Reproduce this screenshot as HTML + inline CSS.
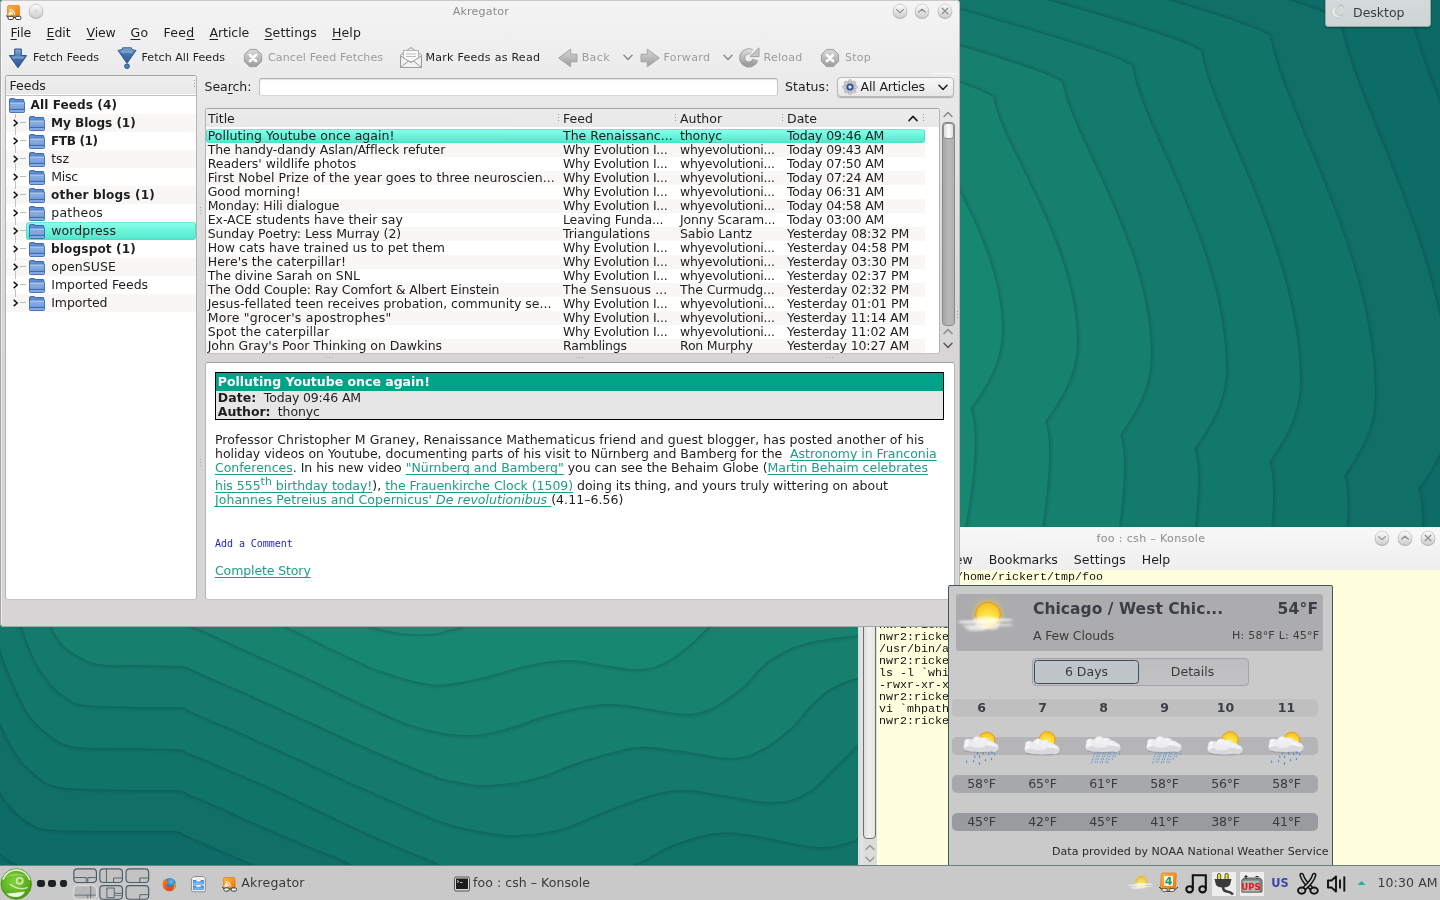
<!DOCTYPE html><html><head><meta charset="utf-8"><title>Desktop</title><style>
*{margin:0;padding:0;box-sizing:border-box}
html,body{width:1440px;height:900px;overflow:hidden;background:#127a6b}
body{position:relative;font-family:"DejaVu Sans","Liberation Sans",sans-serif;font-size:12.5px;color:#1e1e1e;-webkit-font-smoothing:antialiased}
#root{position:absolute;left:0;top:0;width:1440px;height:900px;overflow:hidden;will-change:transform}
.ab{position:absolute;white-space:pre}
.t{font-size:12.5px;line-height:15px;height:15px}
.s{font-size:11.05px;line-height:14px;height:14px}
.b{font-weight:bold}
.tb{font-size:12.1px;font-weight:bold}
.dis{color:#9c9c9c}
.mono{font-family:"Liberation Mono","DejaVu Sans Mono",monospace;font-size:11.67px;line-height:12px;height:12px;color:#111}
u{text-decoration:underline;text-underline-offset:1.5px;text-decoration-thickness:1px;text-decoration-skip-ink:none}
a{color:#1b9e86;text-decoration:underline;text-underline-offset:1.5px;text-decoration-thickness:1px;text-decoration-skip-ink:none}
#akr{left:0;top:0;width:960px;height:627px;border-radius:4px 4px 4px 4px;background:linear-gradient(#f4f4f4 0,#f1f1f1 30px,#ebebeb 75px,#e7e7e7 110px,#e0e0e0 200px,#d8d7d7 300px,#d7d5d6 360px,#d7d5d6 627px);box-shadow:0 0 0 1px rgba(90,90,90,.0);overflow:hidden}
.frame{background:#fff;border:1px solid #b4b4b4;border-top-color:#a2a2a2;border-bottom-color:#c4c4c4;border-radius:3px}
.row{left:0;width:100%}
.sel{background:linear-gradient(#88ffe9,#52e8cd);border:1px solid #4fe0c6;border-top-color:#6ee8d2;border-radius:3px}
</style></head><body><div id="root">
<svg width="0" height="0" style="position:absolute"><defs>
<linearGradient id="fg" x1="0" y1="0" x2="0" y2="1"><stop offset="0" stop-color="#8db1e4"/><stop offset="0.6" stop-color="#7aa1da"/><stop offset="1" stop-color="#8cb0e4"/></linearGradient>
<linearGradient id="bl" x1="0" y1="0" x2="0" y2="1"><stop offset="0" stop-color="#86aedb"/><stop offset="0.45" stop-color="#4272ad"/><stop offset="1" stop-color="#2d5a96"/></linearGradient>
<linearGradient id="gr" x1="0" y1="0" x2="0" y2="1"><stop offset="0" stop-color="#d8d8d8"/><stop offset="1" stop-color="#9c9c9c"/></linearGradient>
<radialGradient id="sun" cx=".5" cy=".7" r=".8"><stop offset="0" stop-color="#fff34a"/><stop offset=".45" stop-color="#fbdc3a"/><stop offset="1" stop-color="#f3b024"/></radialGradient>
<radialGradient id="cl" cx=".4" cy=".35" r=".85"><stop offset="0" stop-color="#fbfbfb"/><stop offset=".55" stop-color="#e6e6e9"/><stop offset="1" stop-color="#bcbcc2"/></radialGradient>
<radialGradient id="suse" cx=".42" cy=".42" r=".62"><stop offset="0" stop-color="#80d23c"/><stop offset=".6" stop-color="#62b424"/><stop offset="1" stop-color="#4c9a14"/></radialGradient>
<linearGradient id="btn" x1="0" y1="0" x2="0" y2="1"><stop offset="0" stop-color="#fbfbfb"/><stop offset="1" stop-color="#cfcfcf"/></linearGradient>
<linearGradient id="org" x1="0" y1="0" x2="1" y2="1"><stop offset="0" stop-color="#ffb24a"/><stop offset="1" stop-color="#f07800"/></linearGradient>
</defs></svg>
<svg class="ab" style="left:0;top:0" id="wall" width="1440" height="900" viewBox="0 0 1440 900">
<defs>
<filter id="wb" x="-5%" y="-5%" width="110%" height="110%"><feGaussianBlur stdDeviation="1.5"/></filter>
<clipPath id="ra"><rect x="955" y="0" width="485" height="600"/></clipPath>
<clipPath id="rb"><rect x="0" y="620" width="870" height="250"/></clipPath>
<clipPath id="c1"><path d="M654,64C724,84 830,113 854,128C862,165 927,240 927,315C927,350 909,376 896,395C903,411 901,455 890,520L890,1000 L1600,1000 L1600,-200 L654,-200 Z"/></clipPath>
<clipPath id="c2"><path d="M724,48C794,68 900,97 924,112C932,156 1002,242 1002,329C1002,364 984,390 970,409C978,425 976,469 964,534L964,1000 L1600,1000 L1600,-200 L724,-200 Z"/></clipPath>
<clipPath id="c3"><path d="M793,33C863,53 969,82 993,97C1001,146 1077,244 1077,342C1077,377 1058,403 1045,422C1052,438 1050,482 1039,547L1039,1000 L1600,1000 L1600,-200 L793,-200 Z"/></clipPath>
<clipPath id="c4"><path d="M862,18C932,38 1038,67 1062,82C1071,136 1151,246 1151,355C1151,390 1133,416 1120,435C1127,451 1125,495 1114,560L1114,1000 L1600,1000 L1600,-200 L862,-200 Z"/></clipPath>
<clipPath id="c5"><path d="M932,2C1002,22 1108,51 1132,66C1141,127 1226,248 1226,369C1226,404 1207,430 1194,449C1201,465 1199,509 1188,574L1188,1000 L1600,1000 L1600,-200 L932,-200 Z"/></clipPath>
<clipPath id="c6"><path d="M1001,-13C1071,7 1177,36 1201,51C1211,117 1300,250 1300,382C1300,417 1282,443 1269,462C1276,478 1274,522 1263,587L1263,1000 L1600,1000 L1600,-200 L1001,-200 Z"/></clipPath>
<clipPath id="c7"><path d="M1070,-28C1140,-8 1246,21 1270,36C1281,108 1375,252 1375,396C1375,431 1356,457 1344,476C1350,492 1348,536 1338,601L1338,1000 L1600,1000 L1600,-200 L1070,-200 Z"/></clipPath>
<clipPath id="c8"><path d="M1140,-44C1210,-24 1316,6 1340,20C1351,98 1450,254 1450,409C1450,444 1431,470 1418,489C1425,505 1423,549 1412,614L1412,1000 L1600,1000 L1600,-200 L1140,-200 Z"/></clipPath>
<clipPath id="c9"><path d="M1209,-59C1279,-39 1385,-10 1409,5C1420,89 1524,256 1524,422C1524,457 1506,483 1493,502C1500,518 1498,562 1487,627L1487,1000 L1600,1000 L1600,-200 L1209,-200 Z"/></clipPath>
<clipPath id="c10"><path d="M1278,-74C1348,-54 1454,-25 1478,-10C1490,79 1599,257 1599,436C1599,471 1580,497 1567,516C1574,532 1572,576 1561,641L1561,1000 L1600,1000 L1600,-200 L1278,-200 Z"/></clipPath>
<clipPath id="c11"><path d="M343,614C348,616 364,623 373,627C383,630 391,631 400,633C410,634 422,635 430,634C438,634 443,632 448,630C453,629 455,629 460,627C464,624 472,616 475,614L475,400 L1300,400 L1300,1100 L-300,1100 L-300,400 L343,400 Z"/></clipPath>
<clipPath id="c12"><path d="M245,607C252,610 273,620 287,627C301,633 314,640 328,647C343,654 361,663 373,668C386,673 394,675 403,678C413,681 422,683 430,684C438,685 445,685 454,683C463,682 471,680 484,677C496,674 515,668 529,665C542,662 555,660 567,660C580,660 591,663 603,665C615,666 629,670 639,669C649,669 655,667 663,663C671,660 679,653 687,647C694,641 702,633 708,627C714,620 720,611 723,608L723,400 L1300,400 L1300,1100 L-300,1100 L-300,400 L245,400 Z"/></clipPath>
<clipPath id="c13"><path d="M149,607C157,610 179,620 194,627C209,633 221,639 239,647C256,655 279,665 299,674C319,683 341,694 358,702C376,710 391,717 403,722C415,726 419,728 430,730C441,733 456,735 469,735C481,735 490,733 505,729C519,725 539,717 555,713C572,708 588,705 603,704C618,703 631,706 645,708C659,710 675,714 687,714C698,714 704,711 714,707C723,702 735,693 744,686C752,678 757,669 767,662C777,655 788,648 803,644C819,639 843,637 860,635C877,633 900,632 908,632L1208,632 L1300,1100 L-300,1100 L-300,400 L149,400 Z"/></clipPath>
<clipPath id="c14"><path d="M42,602C44,606 49,620 52,627C55,633 56,636 60,641C63,646 68,650 75,654C81,658 89,662 99,664C108,666 128,665 134,665L179,666Q187,666 191,669C199,673 221,682 239,690C257,698 279,708 299,717C319,726 336,734 358,744C380,753 413,768 430,774C447,781 450,780 460,782C470,784 477,786 490,785C502,784 518,783 535,778C551,774 571,764 588,759C606,754 623,748 639,747C655,746 669,750 684,751C699,753 716,758 729,758C741,758 749,756 758,751C768,747 779,738 788,730C797,723 805,711 812,704C820,696 825,692 833,687C841,683 848,680 860,677C872,673 900,669 908,668L1208,668 L1300,1100 L-300,1100 L-300,400 L42,400 Z"/></clipPath>
<clipPath id="c15"><path d="M16,602C17,606 20,618 22,627C25,636 29,647 33,656C37,665 42,673 48,680C53,687 59,693 66,697C72,701 75,704 87,705C98,707 126,706 134,707L178,707Q186,707 190,711C198,715 221,724 239,732C257,740 279,750 299,759C319,768 336,776 358,786C380,795 413,810 430,817C447,824 450,824 460,827C470,829 480,831 490,833C500,834 507,836 520,835C532,834 547,833 564,828C582,822 605,810 624,804C643,797 660,791 678,790C695,789 713,794 729,796C745,798 760,803 773,802C786,802 796,799 806,793C816,788 824,778 833,769C842,761 850,752 860,742C870,732 887,715 893,710L1193,710 L1300,1100 L-300,1100 L-300,400 L16,400 Z"/></clipPath>
<clipPath id="c16"><path d="M-9,620C-7,625 -3,638 0,648C3,658 7,669 12,680C17,691 23,706 30,716C37,725 46,733 54,738C62,743 64,745 78,747C91,749 125,748 134,748L176,749Q184,749 188,753C197,756 220,766 239,774C257,782 279,791 299,801C319,810 336,819 358,829C380,839 413,853 430,860C447,867 445,868 460,871C475,874 500,879 520,880C539,881 560,879 579,877C598,874 617,870 633,865C649,859 661,849 675,844C689,839 703,834 717,833C731,831 742,834 758,836C775,839 803,846 818,847C833,848 841,844 848,842C855,841 853,841 860,836C867,832 887,818 893,814L1193,814 L1300,1100 L-300,1100 L-300,620 Z"/></clipPath>
<clipPath id="c17"><path d="M-9,698C-7,702 -4,713 0,722C4,730 9,743 15,751C20,760 25,766 33,772C40,778 43,784 60,787C77,790 122,789 134,790L176,790Q184,790 188,794C197,797 220,807 239,816C257,824 280,834 299,842C318,851 340,857 352,865C364,873 367,885 370,889L670,889 L1300,1100 L-300,1100 L-300,698 Z"/></clipPath>
<clipPath id="c18"><path d="M-9,775C-7,778 -3,786 0,792C3,797 7,803 12,808C17,813 23,819 30,823C37,827 36,828 54,830C71,831 121,831 134,831L173,831Q181,831 185,835C197,840 235,856 254,865C273,874 289,882 299,889C308,895 309,901 311,904L611,904 L1300,1100 L-300,1100 L-300,775 Z"/></clipPath>
<clipPath id="c19"><path d="M-9,841C-7,843 -4,849 0,853C4,857 10,861 18,865C25,869 40,875 45,877L345,877 L1300,1100 L-300,1100 L-300,841 Z"/></clipPath>
</defs>
<rect width="1440" height="900" fill="#1a8a70"/>
<g clip-path="url(#ra)"><g clip-path="url(#c1)"><path d="M654,64C724,84 830,113 854,128C862,165 927,240 927,315C927,350 909,376 896,395C903,411 901,455 890,520L890,1000 L1600,1000 L1600,-200 L654,-200 Z" fill="#18876f"/><path d="M654,64C724,84 830,113 854,128C862,165 927,240 927,315C927,350 909,376 896,395C903,411 901,455 890,520" fill="none" stroke="#023a38" stroke-opacity="0.3" stroke-width="4" filter="url(#wb)"/></g><g clip-path="url(#c2)"><path d="M724,48C794,68 900,97 924,112C932,156 1002,242 1002,329C1002,364 984,390 970,409C978,425 976,469 964,534L964,1000 L1600,1000 L1600,-200 L724,-200 Z" fill="#17836e"/><path d="M724,48C794,68 900,97 924,112C932,156 1002,242 1002,329C1002,364 984,390 970,409C978,425 976,469 964,534" fill="none" stroke="#023a38" stroke-opacity="0.3" stroke-width="4" filter="url(#wb)"/></g><g clip-path="url(#c3)"><path d="M793,33C863,53 969,82 993,97C1001,146 1077,244 1077,342C1077,377 1058,403 1045,422C1052,438 1050,482 1039,547L1039,1000 L1600,1000 L1600,-200 L793,-200 Z" fill="#167f6d"/><path d="M793,33C863,53 969,82 993,97C1001,146 1077,244 1077,342C1077,377 1058,403 1045,422C1052,438 1050,482 1039,547" fill="none" stroke="#023a38" stroke-opacity="0.3" stroke-width="4" filter="url(#wb)"/></g><g clip-path="url(#c4)"><path d="M862,18C932,38 1038,67 1062,82C1071,136 1151,246 1151,355C1151,390 1133,416 1120,435C1127,451 1125,495 1114,560L1114,1000 L1600,1000 L1600,-200 L862,-200 Z" fill="#147b6c"/><path d="M862,18C932,38 1038,67 1062,82C1071,136 1151,246 1151,355C1151,390 1133,416 1120,435C1127,451 1125,495 1114,560" fill="none" stroke="#023a38" stroke-opacity="0.3" stroke-width="4" filter="url(#wb)"/></g><g clip-path="url(#c5)"><path d="M932,2C1002,22 1108,51 1132,66C1141,127 1226,248 1226,369C1226,404 1207,430 1194,449C1201,465 1199,509 1188,574L1188,1000 L1600,1000 L1600,-200 L932,-200 Z" fill="#12786a"/><path d="M932,2C1002,22 1108,51 1132,66C1141,127 1226,248 1226,369C1226,404 1207,430 1194,449C1201,465 1199,509 1188,574" fill="none" stroke="#023a38" stroke-opacity="0.3" stroke-width="4" filter="url(#wb)"/></g><g clip-path="url(#c6)"><path d="M1001,-13C1071,7 1177,36 1201,51C1211,117 1300,250 1300,382C1300,417 1282,443 1269,462C1276,478 1274,522 1263,587L1263,1000 L1600,1000 L1600,-200 L1001,-200 Z" fill="#117469"/><path d="M1001,-13C1071,7 1177,36 1201,51C1211,117 1300,250 1300,382C1300,417 1282,443 1269,462C1276,478 1274,522 1263,587" fill="none" stroke="#023a38" stroke-opacity="0.3" stroke-width="4" filter="url(#wb)"/></g><g clip-path="url(#c7)"><path d="M1070,-28C1140,-8 1246,21 1270,36C1281,108 1375,252 1375,396C1375,431 1356,457 1344,476C1350,492 1348,536 1338,601L1338,1000 L1600,1000 L1600,-200 L1070,-200 Z" fill="#107068"/><path d="M1070,-28C1140,-8 1246,21 1270,36C1281,108 1375,252 1375,396C1375,431 1356,457 1344,476C1350,492 1348,536 1338,601" fill="none" stroke="#023a38" stroke-opacity="0.3" stroke-width="4" filter="url(#wb)"/></g><g clip-path="url(#c8)"><path d="M1140,-44C1210,-24 1316,6 1340,20C1351,98 1450,254 1450,409C1450,444 1431,470 1418,489C1425,505 1423,549 1412,614L1412,1000 L1600,1000 L1600,-200 L1140,-200 Z" fill="#0e6c67"/><path d="M1140,-44C1210,-24 1316,6 1340,20C1351,98 1450,254 1450,409C1450,444 1431,470 1418,489C1425,505 1423,549 1412,614" fill="none" stroke="#023a38" stroke-opacity="0.3" stroke-width="4" filter="url(#wb)"/></g><g clip-path="url(#c9)"><path d="M1209,-59C1279,-39 1385,-10 1409,5C1420,89 1524,256 1524,422C1524,457 1506,483 1493,502C1500,518 1498,562 1487,627L1487,1000 L1600,1000 L1600,-200 L1209,-200 Z" fill="#0c6966"/><path d="M1209,-59C1279,-39 1385,-10 1409,5C1420,89 1524,256 1524,422C1524,457 1506,483 1493,502C1500,518 1498,562 1487,627" fill="none" stroke="#023a38" stroke-opacity="0.3" stroke-width="4" filter="url(#wb)"/></g><g clip-path="url(#c10)"><path d="M1278,-74C1348,-54 1454,-25 1478,-10C1490,79 1599,257 1599,436C1599,471 1580,497 1567,516C1574,532 1572,576 1561,641L1561,1000 L1600,1000 L1600,-200 L1278,-200 Z" fill="#0b6565"/><path d="M1278,-74C1348,-54 1454,-25 1478,-10C1490,79 1599,257 1599,436C1599,471 1580,497 1567,516C1574,532 1572,576 1561,641" fill="none" stroke="#023a38" stroke-opacity="0.3" stroke-width="4" filter="url(#wb)"/></g></g>
<g clip-path="url(#rb)"><g clip-path="url(#c11)"><path d="M343,614C348,616 364,623 373,627C383,630 391,631 400,633C410,634 422,635 430,634C438,634 443,632 448,630C453,629 455,629 460,627C464,624 472,616 475,614L475,400 L1300,400 L1300,1100 L-300,1100 L-300,400 L343,400 Z" fill="#18876f"/><path d="M343,614C348,616 364,623 373,627C383,630 391,631 400,633C410,634 422,635 430,634C438,634 443,632 448,630C453,629 455,629 460,627C464,624 472,616 475,614" fill="none" stroke="#023a38" stroke-opacity="0.3" stroke-width="4" filter="url(#wb)"/></g><g clip-path="url(#c12)"><path d="M245,607C252,610 273,620 287,627C301,633 314,640 328,647C343,654 361,663 373,668C386,673 394,675 403,678C413,681 422,683 430,684C438,685 445,685 454,683C463,682 471,680 484,677C496,674 515,668 529,665C542,662 555,660 567,660C580,660 591,663 603,665C615,666 629,670 639,669C649,669 655,667 663,663C671,660 679,653 687,647C694,641 702,633 708,627C714,620 720,611 723,608L723,400 L1300,400 L1300,1100 L-300,1100 L-300,400 L245,400 Z" fill="#17836e"/><path d="M245,607C252,610 273,620 287,627C301,633 314,640 328,647C343,654 361,663 373,668C386,673 394,675 403,678C413,681 422,683 430,684C438,685 445,685 454,683C463,682 471,680 484,677C496,674 515,668 529,665C542,662 555,660 567,660C580,660 591,663 603,665C615,666 629,670 639,669C649,669 655,667 663,663C671,660 679,653 687,647C694,641 702,633 708,627C714,620 720,611 723,608" fill="none" stroke="#023a38" stroke-opacity="0.3" stroke-width="4" filter="url(#wb)"/></g><g clip-path="url(#c13)"><path d="M149,607C157,610 179,620 194,627C209,633 221,639 239,647C256,655 279,665 299,674C319,683 341,694 358,702C376,710 391,717 403,722C415,726 419,728 430,730C441,733 456,735 469,735C481,735 490,733 505,729C519,725 539,717 555,713C572,708 588,705 603,704C618,703 631,706 645,708C659,710 675,714 687,714C698,714 704,711 714,707C723,702 735,693 744,686C752,678 757,669 767,662C777,655 788,648 803,644C819,639 843,637 860,635C877,633 900,632 908,632L1208,632 L1300,1100 L-300,1100 L-300,400 L149,400 Z" fill="#167f6d"/><path d="M149,607C157,610 179,620 194,627C209,633 221,639 239,647C256,655 279,665 299,674C319,683 341,694 358,702C376,710 391,717 403,722C415,726 419,728 430,730C441,733 456,735 469,735C481,735 490,733 505,729C519,725 539,717 555,713C572,708 588,705 603,704C618,703 631,706 645,708C659,710 675,714 687,714C698,714 704,711 714,707C723,702 735,693 744,686C752,678 757,669 767,662C777,655 788,648 803,644C819,639 843,637 860,635C877,633 900,632 908,632" fill="none" stroke="#023a38" stroke-opacity="0.3" stroke-width="4" filter="url(#wb)"/></g><g clip-path="url(#c14)"><path d="M42,602C44,606 49,620 52,627C55,633 56,636 60,641C63,646 68,650 75,654C81,658 89,662 99,664C108,666 128,665 134,665L179,666Q187,666 191,669C199,673 221,682 239,690C257,698 279,708 299,717C319,726 336,734 358,744C380,753 413,768 430,774C447,781 450,780 460,782C470,784 477,786 490,785C502,784 518,783 535,778C551,774 571,764 588,759C606,754 623,748 639,747C655,746 669,750 684,751C699,753 716,758 729,758C741,758 749,756 758,751C768,747 779,738 788,730C797,723 805,711 812,704C820,696 825,692 833,687C841,683 848,680 860,677C872,673 900,669 908,668L1208,668 L1300,1100 L-300,1100 L-300,400 L42,400 Z" fill="#147b6c"/><path d="M42,602C44,606 49,620 52,627C55,633 56,636 60,641C63,646 68,650 75,654C81,658 89,662 99,664C108,666 128,665 134,665L179,666Q187,666 191,669C199,673 221,682 239,690C257,698 279,708 299,717C319,726 336,734 358,744C380,753 413,768 430,774C447,781 450,780 460,782C470,784 477,786 490,785C502,784 518,783 535,778C551,774 571,764 588,759C606,754 623,748 639,747C655,746 669,750 684,751C699,753 716,758 729,758C741,758 749,756 758,751C768,747 779,738 788,730C797,723 805,711 812,704C820,696 825,692 833,687C841,683 848,680 860,677C872,673 900,669 908,668" fill="none" stroke="#023a38" stroke-opacity="0.3" stroke-width="4" filter="url(#wb)"/></g><g clip-path="url(#c15)"><path d="M16,602C17,606 20,618 22,627C25,636 29,647 33,656C37,665 42,673 48,680C53,687 59,693 66,697C72,701 75,704 87,705C98,707 126,706 134,707L178,707Q186,707 190,711C198,715 221,724 239,732C257,740 279,750 299,759C319,768 336,776 358,786C380,795 413,810 430,817C447,824 450,824 460,827C470,829 480,831 490,833C500,834 507,836 520,835C532,834 547,833 564,828C582,822 605,810 624,804C643,797 660,791 678,790C695,789 713,794 729,796C745,798 760,803 773,802C786,802 796,799 806,793C816,788 824,778 833,769C842,761 850,752 860,742C870,732 887,715 893,710L1193,710 L1300,1100 L-300,1100 L-300,400 L16,400 Z" fill="#12786a"/><path d="M16,602C17,606 20,618 22,627C25,636 29,647 33,656C37,665 42,673 48,680C53,687 59,693 66,697C72,701 75,704 87,705C98,707 126,706 134,707L178,707Q186,707 190,711C198,715 221,724 239,732C257,740 279,750 299,759C319,768 336,776 358,786C380,795 413,810 430,817C447,824 450,824 460,827C470,829 480,831 490,833C500,834 507,836 520,835C532,834 547,833 564,828C582,822 605,810 624,804C643,797 660,791 678,790C695,789 713,794 729,796C745,798 760,803 773,802C786,802 796,799 806,793C816,788 824,778 833,769C842,761 850,752 860,742C870,732 887,715 893,710" fill="none" stroke="#023a38" stroke-opacity="0.3" stroke-width="4" filter="url(#wb)"/></g><g clip-path="url(#c16)"><path d="M-9,620C-7,625 -3,638 0,648C3,658 7,669 12,680C17,691 23,706 30,716C37,725 46,733 54,738C62,743 64,745 78,747C91,749 125,748 134,748L176,749Q184,749 188,753C197,756 220,766 239,774C257,782 279,791 299,801C319,810 336,819 358,829C380,839 413,853 430,860C447,867 445,868 460,871C475,874 500,879 520,880C539,881 560,879 579,877C598,874 617,870 633,865C649,859 661,849 675,844C689,839 703,834 717,833C731,831 742,834 758,836C775,839 803,846 818,847C833,848 841,844 848,842C855,841 853,841 860,836C867,832 887,818 893,814L1193,814 L1300,1100 L-300,1100 L-300,620 Z" fill="#117469"/><path d="M-9,620C-7,625 -3,638 0,648C3,658 7,669 12,680C17,691 23,706 30,716C37,725 46,733 54,738C62,743 64,745 78,747C91,749 125,748 134,748L176,749Q184,749 188,753C197,756 220,766 239,774C257,782 279,791 299,801C319,810 336,819 358,829C380,839 413,853 430,860C447,867 445,868 460,871C475,874 500,879 520,880C539,881 560,879 579,877C598,874 617,870 633,865C649,859 661,849 675,844C689,839 703,834 717,833C731,831 742,834 758,836C775,839 803,846 818,847C833,848 841,844 848,842C855,841 853,841 860,836C867,832 887,818 893,814" fill="none" stroke="#023a38" stroke-opacity="0.3" stroke-width="4" filter="url(#wb)"/></g><g clip-path="url(#c17)"><path d="M-9,698C-7,702 -4,713 0,722C4,730 9,743 15,751C20,760 25,766 33,772C40,778 43,784 60,787C77,790 122,789 134,790L176,790Q184,790 188,794C197,797 220,807 239,816C257,824 280,834 299,842C318,851 340,857 352,865C364,873 367,885 370,889L670,889 L1300,1100 L-300,1100 L-300,698 Z" fill="#107068"/><path d="M-9,698C-7,702 -4,713 0,722C4,730 9,743 15,751C20,760 25,766 33,772C40,778 43,784 60,787C77,790 122,789 134,790L176,790Q184,790 188,794C197,797 220,807 239,816C257,824 280,834 299,842C318,851 340,857 352,865C364,873 367,885 370,889" fill="none" stroke="#023a38" stroke-opacity="0.3" stroke-width="4" filter="url(#wb)"/></g><g clip-path="url(#c18)"><path d="M-9,775C-7,778 -3,786 0,792C3,797 7,803 12,808C17,813 23,819 30,823C37,827 36,828 54,830C71,831 121,831 134,831L173,831Q181,831 185,835C197,840 235,856 254,865C273,874 289,882 299,889C308,895 309,901 311,904L611,904 L1300,1100 L-300,1100 L-300,775 Z" fill="#0e6c67"/><path d="M-9,775C-7,778 -3,786 0,792C3,797 7,803 12,808C17,813 23,819 30,823C37,827 36,828 54,830C71,831 121,831 134,831L173,831Q181,831 185,835C197,840 235,856 254,865C273,874 289,882 299,889C308,895 309,901 311,904" fill="none" stroke="#023a38" stroke-opacity="0.3" stroke-width="4" filter="url(#wb)"/></g><g clip-path="url(#c19)"><path d="M-9,841C-7,843 -4,849 0,853C4,857 10,861 18,865C25,869 40,875 45,877L345,877 L1300,1100 L-300,1100 L-300,841 Z" fill="#0c6966"/><path d="M-9,841C-7,843 -4,849 0,853C4,857 10,861 18,865C25,869 40,875 45,877" fill="none" stroke="#023a38" stroke-opacity="0.3" stroke-width="4" filter="url(#wb)"/></g></g>
</svg>
<div class="ab " style="left:1325px;top:-3px;width:106px;height:30px;background:linear-gradient(#d5dbdb,#cdd4d4);border:1px solid #9aa5a5;border-radius:3px;box-shadow:0 1px 2px rgba(0,0,0,.35)"></div>
<svg class="ab" style="left:1329px;top:3px" width="17" height="17" viewBox="0 0 17 17"><path d="M11 3.5 A6 6 0 1 0 14 11.5 A4.6 4.6 0 1 1 11 3.5 Z" fill="#e6e6e6" stroke="#bbb" stroke-width=".6"/><circle cx="12.5" cy="2.2" r=".7" fill="#999"/><circle cx="14.5" cy="3.6" r=".6" fill="#aaa"/><circle cx="10.3" cy="1.5" r=".6" fill="#aaa"/></svg>
<span class="ab t" style="left:1353px;top:5px;color:#3c3c3c;">Desktop</span>
<div class="ab" id="kon" style="left:858px;top:527px;width:582px;height:340px;background:linear-gradient(#f8f8f8 0,#f4f4f4 18px,#eeeeee 43px,#e4e4e4 60px,#dcdcdc);">
<span class="ab s" style="left:238.5px;top:5px;color:#8c8c8c;letter-spacing:0.338px;">foo : csh – Konsole</span>
<svg class="ab" style="left:515.3px;top:2.4px" width="18" height="19" viewBox="0 0 18 19"><circle cx="9" cy="9.9" r="7.2" fill="#b4b4b4"/><circle cx="9" cy="9" r="6.9" fill="url(#btn)" stroke="#c2c2c2" stroke-width=".7"/><g fill="none" stroke="#8f8f8f" stroke-width="1.25" stroke-linecap="round" stroke-linejoin="round"><path d="M5.6 7.6 L9 10.6 L12.4 7.6" /></g></svg>
<svg class="ab" style="left:538.2px;top:2.4px" width="18" height="19" viewBox="0 0 18 19"><circle cx="9" cy="9.9" r="7.2" fill="#b4b4b4"/><circle cx="9" cy="9" r="6.9" fill="url(#btn)" stroke="#c2c2c2" stroke-width=".7"/><g fill="none" stroke="#8f8f8f" stroke-width="1.25" stroke-linecap="round" stroke-linejoin="round"><path d="M5.6 10.2 L9 7.2 L12.4 10.2" /></g></svg>
<svg class="ab" style="left:561.1px;top:2.4px" width="18" height="19" viewBox="0 0 18 19"><circle cx="9" cy="9.9" r="7.2" fill="#b4b4b4"/><circle cx="9" cy="9" r="6.9" fill="url(#btn)" stroke="#c2c2c2" stroke-width=".7"/><g fill="none" stroke="#8f8f8f" stroke-width="1.25" stroke-linecap="round" stroke-linejoin="round"><path d="M6.2 6.2 L11.8 11.8 M11.8 6.2 L6.2 11.8" /></g></svg>
<span class="ab t" style="left:85px;top:25px;">View</span>
<span class="ab t" style="left:130.8px;top:25px;letter-spacing:-0.094px;">Bookmarks</span>
<span class="ab t" style="left:215.8px;top:25px;letter-spacing:0.102px;">Settings</span>
<span class="ab t" style="left:283.8px;top:25px;letter-spacing:-0.050px;">Help</span>
<div class="ab " style="left:19px;top:43px;width:563px;height:300px;background:#ffffdd"></div>
<div class="ab " style="left:0px;top:43px;width:5px;height:300px;background:linear-gradient(90deg,#d9d9d9,#e6e6e6)"></div>
<div class="ab " style="left:5px;top:43px;width:14px;height:300px;background:#dcdcdc"></div>
<div class="ab " style="left:5px;top:60px;width:13px;height:252px;border:1px solid #6e6e6e;border-radius:4px;background:linear-gradient(90deg,#dedede,#efefef 45%,#e4e4e4)"></div>
<svg class="ab" style="left:7px;top:317px" width="10" height="7" viewBox="0 0 10 7"><path d="M1 5.6 L5 1.4 L9 5.6" fill="none" stroke="#9a9a9a" stroke-width="1.4" stroke-linecap="round" stroke-linejoin="round"/></svg>
<svg class="ab" style="left:7px;top:329px" width="10" height="7" viewBox="0 0 10 7"><path d="M1 1.2 L5 5.4 L9 1.2" fill="none" stroke="#9a9a9a" stroke-width="1.4" stroke-linecap="round" stroke-linejoin="round"/></svg>
<span class="ab mono" style="left:98px;top:44px;">/home/rickert/tmp/foo</span>
<span class="ab mono" style="left:21px;top:91.6px;">nwr2:rickert</span>
<span class="ab mono" style="left:21px;top:103.6px;">nwr2:rickert</span>
<span class="ab mono" style="left:21px;top:115.6px;">/usr/bin/akregator</span>
<span class="ab mono" style="left:21px;top:127.6px;">nwr2:rickert</span>
<span class="ab mono" style="left:21px;top:139.6px;">ls -l `which</span>
<span class="ab mono" style="left:21px;top:151.6px;">-rwxr-xr-x</span>
<span class="ab mono" style="left:21px;top:163.6px;">nwr2:rickert</span>
<span class="ab mono" style="left:21px;top:175.6px;">vi `mhpath</span>
<span class="ab mono" style="left:21px;top:187.6px;">nwr2:rickert</span>
</div>
<div class="ab" id="akr">
<div class="ab " style="left:0px;top:0px;width:960px;height:627px;border:1px solid #a6a6a6;border-radius:4px 4px 4px 4px;border-top-color:#c8c8c8;border-right-color:#b9b9b9;box-shadow:inset 1px 0 0 rgba(255,255,255,.55)"></div>
<svg class="ab" style="left:5px;top:4.5px" width="19" height="16" viewBox="0 0 19 16"><rect x="2.5" y="0.5" width="12" height="11.5" rx="1.5" fill="url(#org)" stroke="#e07000" stroke-width=".6"/><path d="M5 10 a1 1 0 1 1 .01 0 M4.5 6.8 a3 3 0 0 1 3 3 M4.5 4.6 a5.2 5.2 0 0 1 5.2 5.2" fill="none" stroke="#fff" stroke-width="1.1"/><rect x="3" y="11.3" width="5.5" height="3.2" rx="1.4" fill="#fff" stroke="#333" stroke-width="1"/><rect x="10.5" y="11.3" width="5.5" height="3.2" rx="1.4" fill="#fff" stroke="#333" stroke-width="1"/><path d="M1 10.5 L3 12 M8.5 12.5 L10.5 12.5" stroke="#333" stroke-width="1" fill="none"/></svg>
<svg class="ab" style="left:27px;top:2.3px" width="18" height="19" viewBox="0 0 18 19"><circle cx="9" cy="9.9" r="7.2" fill="#b4b4b4"/><circle cx="9" cy="9" r="6.9" fill="url(#btn)" stroke="#c2c2c2" stroke-width=".7"/><g fill="none" stroke="#8f8f8f" stroke-width="1.25" stroke-linecap="round" stroke-linejoin="round"></g><circle cx="9" cy="9" r=".7" fill="#aaa"/></svg>
<span class="ab s" style="left:452.7px;top:4.8px;color:#8a8a8a;letter-spacing:0.203px;">Akregator</span>
<svg class="ab" style="left:890.5px;top:2.3px" width="18" height="19" viewBox="0 0 18 19"><circle cx="9" cy="9.9" r="7.2" fill="#b4b4b4"/><circle cx="9" cy="9" r="6.9" fill="url(#btn)" stroke="#c2c2c2" stroke-width=".7"/><g fill="none" stroke="#8f8f8f" stroke-width="1.25" stroke-linecap="round" stroke-linejoin="round"><path d="M5.6 7.6 L9 10.6 L12.4 7.6" /></g></svg>
<svg class="ab" style="left:913.4px;top:2.3px" width="18" height="19" viewBox="0 0 18 19"><circle cx="9" cy="9.9" r="7.2" fill="#b4b4b4"/><circle cx="9" cy="9" r="6.9" fill="url(#btn)" stroke="#c2c2c2" stroke-width=".7"/><g fill="none" stroke="#8f8f8f" stroke-width="1.25" stroke-linecap="round" stroke-linejoin="round"><path d="M5.6 10.2 L9 7.2 L12.4 10.2" /></g></svg>
<svg class="ab" style="left:936.3px;top:2.3px" width="18" height="19" viewBox="0 0 18 19"><circle cx="9" cy="9.9" r="7.2" fill="#b4b4b4"/><circle cx="9" cy="9" r="6.9" fill="url(#btn)" stroke="#c2c2c2" stroke-width=".7"/><g fill="none" stroke="#8f8f8f" stroke-width="1.25" stroke-linecap="round" stroke-linejoin="round"><path d="M6.2 6.2 L11.8 11.8 M11.8 6.2 L6.2 11.8" /></g></svg>
<div class="ab " style="left:931px;top:72.5px;width:26px;height:1px;background:#fafafa"></div>
<span class="ab t" style="left:10.5px;top:25px;letter-spacing:-0.055px;"><u>F</u>ile</span>
<span class="ab t" style="left:46.5px;top:25px;"><u>E</u>dit</span>
<span class="ab t" style="left:86.5px;top:25px;letter-spacing:-0.118px;"><u>V</u>iew</span>
<span class="ab t" style="left:130.5px;top:25px;letter-spacing:0.178px;"><u>G</u>o</span>
<span class="ab t" style="left:163.5px;top:25px;letter-spacing:0.293px;">Fee<u>d</u></span>
<span class="ab t" style="left:209.5px;top:25px;letter-spacing:-0.061px;"><u>A</u>rticle</span>
<span class="ab t" style="left:264.5px;top:25px;letter-spacing:0.152px;"><u>S</u>ettings</span>
<span class="ab t" style="left:332px;top:25px;letter-spacing:0.121px;"><u>H</u>elp</span>
<svg class="ab" style="left:8px;top:48.3px" width="20" height="20" viewBox="0 0 20 20"><path d="M6.7 1 L13.3 1 L13.3 7.6 L18.6 7.6 L10 19.8 L1.4 7.6 L6.7 7.6 Z" fill="url(#bl)" stroke="#2b4f80" stroke-width="1" stroke-linejoin="round"/><path d="M3.5 8.6 L16.5 8.6 L14.6 11 Q10 9.5 5.4 11 Z" fill="#a9c8ea" opacity=".55"/></svg>
<span class="ab s" style="left:33px;top:51px;letter-spacing:0.038px;">Fetch Feeds</span>
<svg class="ab" style="left:117px;top:46.6px" width="20" height="23" viewBox="0 0 20 23"><path d="M5.6 0.8 L14.4 0.8 L14.8 2.6 L19 3.4 L10.4 15.8 L9.6 15.8 L1 3.4 L5.2 2.6 Z" fill="url(#bl)" stroke="#2b4f80" stroke-width=".9" stroke-linejoin="round"/><path d="M4 4.2 L16 4.2 L14.6 6.2 Q10 5 5.4 6.2 Z" fill="#a9c8ea" opacity=".5"/><circle cx="10" cy="19.2" r="2.4" fill="#4d7ebc" stroke="#2b4f80" stroke-width=".9"/></svg>
<span class="ab s" style="left:141.5px;top:51px;letter-spacing:0.048px;">Fetch All Feeds</span>
<svg class="ab" style="left:243px;top:48px" width="20" height="20" viewBox="0 0 20 20"><path d="M6.6 1.4 L13.4 1.4 L18.6 6.6 L18.6 13.4 L13.4 18.6 L6.6 18.6 L1.4 13.4 L1.4 6.6 Z" fill="url(#gr)" stroke="#9e9e9e" stroke-width="1"/><path d="M7 7 L13 13 M13 7 L7 13" stroke="#fff" stroke-width="2.7" stroke-linecap="round"/></svg>
<span class="ab s dis" style="left:268px;top:51px;letter-spacing:0.099px;">Cancel Feed Fetches</span>
<svg class="ab" style="left:399px;top:46px" width="24" height="24" viewBox="0 0 24 24"><path d="M1.5 9 L12 1.5 L22.5 9 L22.5 21.5 L1.5 21.5 Z" fill="#eeeeee" stroke="#9a9a9a" stroke-width="1"/><rect x="4.5" y="4.5" width="15" height="11" fill="#fafafa" stroke="#aaa" stroke-width=".8"/><path d="M7 8 H17 M7 10.5 H17" stroke="#bbb" stroke-width="1"/><path d="M1.5 10 L12 16.5 L22.5 10 L22.5 21.5 L1.5 21.5 Z" fill="#f2f2f2" stroke="#9a9a9a" stroke-width="1"/><path d="M1.5 21.5 L9.5 15 M22.5 21.5 L14.5 15" stroke="#9a9a9a" stroke-width="1" fill="none"/></svg>
<span class="ab s" style="left:425.5px;top:51px;letter-spacing:0.252px;">Mark Feeds as Read</span>
<svg class="ab" style="left:557.6px;top:48px" width="20" height="20" viewBox="0 0 20 20"><path transform="translate(20,0) scale(-1,1)" d="M1 6.2 L7.3 6.2 L7.3 1.2 L19.4 10 L7.3 18.8 L7.3 13.8 L1 13.8 Z" fill="url(#gr)" stroke="#a4a4a4" stroke-width="1" stroke-linejoin="round"/></svg>
<span class="ab s dis" style="left:581.7px;top:51px;letter-spacing:0.343px;">Back</span>
<svg class="ab" style="left:622.5px;top:54.3px" width="10" height="7" viewBox="0 0 10 7"><path d="M1 1.2 L5 5.4 L9 1.2" fill="none" stroke="#8c8c8c" stroke-width="1.5" stroke-linecap="round" stroke-linejoin="round"/></svg>
<svg class="ab" style="left:639.6px;top:48px" width="20" height="20" viewBox="0 0 20 20"><path  d="M1 6.2 L7.3 6.2 L7.3 1.2 L19.4 10 L7.3 18.8 L7.3 13.8 L1 13.8 Z" fill="url(#gr)" stroke="#a4a4a4" stroke-width="1" stroke-linejoin="round"/></svg>
<span class="ab s dis" style="left:663.5px;top:51px;letter-spacing:0.352px;">Forward</span>
<svg class="ab" style="left:722.5px;top:54.3px" width="10" height="7" viewBox="0 0 10 7"><path d="M1 1.2 L5 5.4 L9 1.2" fill="none" stroke="#8c8c8c" stroke-width="1.5" stroke-linecap="round" stroke-linejoin="round"/></svg>
<svg class="ab" style="left:739px;top:47px" width="21" height="21" viewBox="0 0 21 21"><path d="M16.2 12.6 A6.6 6.6 0 1 1 12.6 4.9" fill="none" stroke="#9c9c9c" stroke-width="6"/><path d="M16.2 12.6 A6.6 6.6 0 1 1 12.6 4.9" fill="none" stroke="url(#gr)" stroke-width="4.4"/><path d="M11 9.6 L20 9.6 L20 0.8 Z" fill="#c6c6c6" stroke="#9c9c9c" stroke-width=".9" stroke-linejoin="round"/></svg>
<span class="ab s dis" style="left:763.5px;top:51px;letter-spacing:0.218px;">Reload</span>
<svg class="ab" style="left:820px;top:48px" width="20" height="20" viewBox="0 0 20 20"><path d="M6.6 1.4 L13.4 1.4 L18.6 6.6 L18.6 13.4 L13.4 18.6 L6.6 18.6 L1.4 13.4 L1.4 6.6 Z" fill="url(#gr)" stroke="#9e9e9e" stroke-width="1"/><path d="M7 7 L13 13 M13 7 L7 13" stroke="#fff" stroke-width="2.7" stroke-linecap="round"/></svg>
<span class="ab s dis" style="left:845px;top:51px;letter-spacing:0.219px;">Stop</span>
<div class="ab frame" style="left:5px;top:75px;width:192px;height:525px;"></div>
<div class="ab " style="left:6px;top:76px;width:190px;height:18px;background:linear-gradient(#efefef,#e8e8e8);border-radius:2px 2px 0 0"></div>
<div class="ab " style="left:6px;top:95px;width:190px;height:1px;background:#c2c2c2"></div>
<span class="ab t" style="left:9.5px;top:78px;">Feeds</span>
<div class="ab " style="left:194px;top:80px;width:1px;height:1px;background:#999;box-shadow:0 3px 0 #999,0 6px 0 #999"></div>
<div class="ab " style="left:6px;top:114px;width:190px;height:18px;background:#f8f7f6"></div>
<div class="ab " style="left:20px;top:122px;width:6px;height:1px;background:#bcbcbc"></div>
<div class="ab " style="left:15px;top:114px;width:1px;height:4px;background:#c0c0c0"></div>
<div class="ab " style="left:15px;top:127px;width:1px;height:4px;background:#c0c0c0"></div>
<div class="ab " style="left:20px;top:140px;width:6px;height:1px;background:#bcbcbc"></div>
<div class="ab " style="left:15px;top:131px;width:1px;height:4px;background:#c0c0c0"></div>
<div class="ab " style="left:15px;top:145px;width:1px;height:4px;background:#c0c0c0"></div>
<div class="ab " style="left:6px;top:150px;width:190px;height:18px;background:#f8f7f6"></div>
<div class="ab " style="left:20px;top:158px;width:6px;height:1px;background:#bcbcbc"></div>
<div class="ab " style="left:15px;top:149px;width:1px;height:4px;background:#c0c0c0"></div>
<div class="ab " style="left:15px;top:163px;width:1px;height:4px;background:#c0c0c0"></div>
<div class="ab " style="left:20px;top:176px;width:6px;height:1px;background:#bcbcbc"></div>
<div class="ab " style="left:15px;top:167px;width:1px;height:4px;background:#c0c0c0"></div>
<div class="ab " style="left:15px;top:181px;width:1px;height:4px;background:#c0c0c0"></div>
<div class="ab " style="left:6px;top:186px;width:190px;height:18px;background:#f8f7f6"></div>
<div class="ab " style="left:20px;top:194px;width:6px;height:1px;background:#bcbcbc"></div>
<div class="ab " style="left:15px;top:185px;width:1px;height:4px;background:#c0c0c0"></div>
<div class="ab " style="left:15px;top:199px;width:1px;height:4px;background:#c0c0c0"></div>
<div class="ab " style="left:20px;top:212px;width:6px;height:1px;background:#bcbcbc"></div>
<div class="ab " style="left:15px;top:203px;width:1px;height:4px;background:#c0c0c0"></div>
<div class="ab " style="left:15px;top:217px;width:1px;height:4px;background:#c0c0c0"></div>
<div class="ab " style="left:6px;top:222px;width:190px;height:18px;background:#f8f7f6"></div>
<div class="ab " style="left:20px;top:230px;width:6px;height:1px;background:#bcbcbc"></div>
<div class="ab " style="left:15px;top:221px;width:1px;height:4px;background:#c0c0c0"></div>
<div class="ab " style="left:15px;top:235px;width:1px;height:4px;background:#c0c0c0"></div>
<div class="ab " style="left:20px;top:248px;width:6px;height:1px;background:#bcbcbc"></div>
<div class="ab " style="left:15px;top:239px;width:1px;height:4px;background:#c0c0c0"></div>
<div class="ab " style="left:15px;top:253px;width:1px;height:4px;background:#c0c0c0"></div>
<div class="ab " style="left:6px;top:258px;width:190px;height:18px;background:#f8f7f6"></div>
<div class="ab " style="left:20px;top:266px;width:6px;height:1px;background:#bcbcbc"></div>
<div class="ab " style="left:15px;top:257px;width:1px;height:4px;background:#c0c0c0"></div>
<div class="ab " style="left:15px;top:271px;width:1px;height:4px;background:#c0c0c0"></div>
<div class="ab " style="left:20px;top:284px;width:6px;height:1px;background:#bcbcbc"></div>
<div class="ab " style="left:15px;top:275px;width:1px;height:4px;background:#c0c0c0"></div>
<div class="ab " style="left:15px;top:289px;width:1px;height:4px;background:#c0c0c0"></div>
<div class="ab " style="left:6px;top:294px;width:190px;height:18px;background:#f8f7f6"></div>
<div class="ab " style="left:20px;top:302px;width:6px;height:1px;background:#bcbcbc"></div>
<div class="ab " style="left:15px;top:293px;width:1px;height:4px;background:#c0c0c0"></div>
<svg class="ab" style="left:9px;top:98px" width="16" height="16" viewBox="0 0 16 16"><path d="M0.5 1.6 Q0.5 0.6 1.5 0.6 L5 0.6 Q5.8 0.6 6 1.5 L14 1.5 Q14.8 1.5 14.8 2.4 L14.8 6 L0.5 6 Z" fill="#4a7cc4" stroke="#2f62aa" stroke-width=".9"/><path d="M1.3 1.6 L5 1.6 L5.3 2.6 L13.8 2.6 L13.8 3.6 L1.3 3.6 Z" fill="#6a98d8"/><path d="M0.5 4.4 L15.5 4.4 L15.5 13.6 Q15.5 14.5 14.6 14.5 L1.4 14.5 Q0.5 14.5 0.5 13.6 Z" fill="url(#fg)" stroke="#3a6ab0" stroke-width=".9"/><rect x="1" y="4.5" width="14" height="1" fill="#c0d8f6"/><rect x="0.9" y="10.9" width="14.2" height="1" fill="#2f62aa" opacity=".9"/></svg>
<span class="ab tb" style="left:30.5px;top:96px;height:18px;line-height:18px;letter-spacing:0.071px;">All Feeds (4)</span>
<svg class="ab" style="left:13px;top:118.7px" width="6" height="8" viewBox="0 0 6 8"><path d="M0.7 0.9 L4.2 4 L0.7 7.1" fill="none" stroke="#111" stroke-width="1.45" stroke-linejoin="miter"/></svg>
<svg class="ab" style="left:29px;top:116px" width="16" height="16" viewBox="0 0 16 16"><path d="M0.5 1.6 Q0.5 0.6 1.5 0.6 L5 0.6 Q5.8 0.6 6 1.5 L14 1.5 Q14.8 1.5 14.8 2.4 L14.8 6 L0.5 6 Z" fill="#4a7cc4" stroke="#2f62aa" stroke-width=".9"/><path d="M1.3 1.6 L5 1.6 L5.3 2.6 L13.8 2.6 L13.8 3.6 L1.3 3.6 Z" fill="#6a98d8"/><path d="M0.5 4.4 L15.5 4.4 L15.5 13.6 Q15.5 14.5 14.6 14.5 L1.4 14.5 Q0.5 14.5 0.5 13.6 Z" fill="url(#fg)" stroke="#3a6ab0" stroke-width=".9"/><rect x="1" y="4.5" width="14" height="1" fill="#c0d8f6"/><rect x="0.9" y="10.9" width="14.2" height="1" fill="#2f62aa" opacity=".9"/></svg>
<span class="ab tb" style="left:51px;top:114px;height:18px;line-height:18px;letter-spacing:-0.054px;">My Blogs (1)</span>
<svg class="ab" style="left:13px;top:136.7px" width="6" height="8" viewBox="0 0 6 8"><path d="M0.7 0.9 L4.2 4 L0.7 7.1" fill="none" stroke="#111" stroke-width="1.45" stroke-linejoin="miter"/></svg>
<svg class="ab" style="left:29px;top:134px" width="16" height="16" viewBox="0 0 16 16"><path d="M0.5 1.6 Q0.5 0.6 1.5 0.6 L5 0.6 Q5.8 0.6 6 1.5 L14 1.5 Q14.8 1.5 14.8 2.4 L14.8 6 L0.5 6 Z" fill="#4a7cc4" stroke="#2f62aa" stroke-width=".9"/><path d="M1.3 1.6 L5 1.6 L5.3 2.6 L13.8 2.6 L13.8 3.6 L1.3 3.6 Z" fill="#6a98d8"/><path d="M0.5 4.4 L15.5 4.4 L15.5 13.6 Q15.5 14.5 14.6 14.5 L1.4 14.5 Q0.5 14.5 0.5 13.6 Z" fill="url(#fg)" stroke="#3a6ab0" stroke-width=".9"/><rect x="1" y="4.5" width="14" height="1" fill="#c0d8f6"/><rect x="0.9" y="10.9" width="14.2" height="1" fill="#2f62aa" opacity=".9"/></svg>
<span class="ab tb" style="left:51px;top:132px;height:18px;line-height:18px;letter-spacing:-0.389px;">FTB (1)</span>
<svg class="ab" style="left:13px;top:154.7px" width="6" height="8" viewBox="0 0 6 8"><path d="M0.7 0.9 L4.2 4 L0.7 7.1" fill="none" stroke="#111" stroke-width="1.45" stroke-linejoin="miter"/></svg>
<svg class="ab" style="left:29px;top:152px" width="16" height="16" viewBox="0 0 16 16"><path d="M0.5 1.6 Q0.5 0.6 1.5 0.6 L5 0.6 Q5.8 0.6 6 1.5 L14 1.5 Q14.8 1.5 14.8 2.4 L14.8 6 L0.5 6 Z" fill="#4a7cc4" stroke="#2f62aa" stroke-width=".9"/><path d="M1.3 1.6 L5 1.6 L5.3 2.6 L13.8 2.6 L13.8 3.6 L1.3 3.6 Z" fill="#6a98d8"/><path d="M0.5 4.4 L15.5 4.4 L15.5 13.6 Q15.5 14.5 14.6 14.5 L1.4 14.5 Q0.5 14.5 0.5 13.6 Z" fill="url(#fg)" stroke="#3a6ab0" stroke-width=".9"/><rect x="1" y="4.5" width="14" height="1" fill="#c0d8f6"/><rect x="0.9" y="10.9" width="14.2" height="1" fill="#2f62aa" opacity=".9"/></svg>
<span class="ab t" style="left:51.3px;top:150px;height:18px;line-height:18px;letter-spacing:-0.095px;">tsz</span>
<svg class="ab" style="left:13px;top:172.7px" width="6" height="8" viewBox="0 0 6 8"><path d="M0.7 0.9 L4.2 4 L0.7 7.1" fill="none" stroke="#111" stroke-width="1.45" stroke-linejoin="miter"/></svg>
<svg class="ab" style="left:29px;top:170px" width="16" height="16" viewBox="0 0 16 16"><path d="M0.5 1.6 Q0.5 0.6 1.5 0.6 L5 0.6 Q5.8 0.6 6 1.5 L14 1.5 Q14.8 1.5 14.8 2.4 L14.8 6 L0.5 6 Z" fill="#4a7cc4" stroke="#2f62aa" stroke-width=".9"/><path d="M1.3 1.6 L5 1.6 L5.3 2.6 L13.8 2.6 L13.8 3.6 L1.3 3.6 Z" fill="#6a98d8"/><path d="M0.5 4.4 L15.5 4.4 L15.5 13.6 Q15.5 14.5 14.6 14.5 L1.4 14.5 Q0.5 14.5 0.5 13.6 Z" fill="url(#fg)" stroke="#3a6ab0" stroke-width=".9"/><rect x="1" y="4.5" width="14" height="1" fill="#c0d8f6"/><rect x="0.9" y="10.9" width="14.2" height="1" fill="#2f62aa" opacity=".9"/></svg>
<span class="ab t" style="left:51.3px;top:168px;height:18px;line-height:18px;letter-spacing:-0.239px;">Misc</span>
<svg class="ab" style="left:13px;top:190.7px" width="6" height="8" viewBox="0 0 6 8"><path d="M0.7 0.9 L4.2 4 L0.7 7.1" fill="none" stroke="#111" stroke-width="1.45" stroke-linejoin="miter"/></svg>
<svg class="ab" style="left:29px;top:188px" width="16" height="16" viewBox="0 0 16 16"><path d="M0.5 1.6 Q0.5 0.6 1.5 0.6 L5 0.6 Q5.8 0.6 6 1.5 L14 1.5 Q14.8 1.5 14.8 2.4 L14.8 6 L0.5 6 Z" fill="#4a7cc4" stroke="#2f62aa" stroke-width=".9"/><path d="M1.3 1.6 L5 1.6 L5.3 2.6 L13.8 2.6 L13.8 3.6 L1.3 3.6 Z" fill="#6a98d8"/><path d="M0.5 4.4 L15.5 4.4 L15.5 13.6 Q15.5 14.5 14.6 14.5 L1.4 14.5 Q0.5 14.5 0.5 13.6 Z" fill="url(#fg)" stroke="#3a6ab0" stroke-width=".9"/><rect x="1" y="4.5" width="14" height="1" fill="#c0d8f6"/><rect x="0.9" y="10.9" width="14.2" height="1" fill="#2f62aa" opacity=".9"/></svg>
<span class="ab tb" style="left:51px;top:186px;height:18px;line-height:18px;letter-spacing:0.144px;">other blogs (1)</span>
<svg class="ab" style="left:13px;top:208.7px" width="6" height="8" viewBox="0 0 6 8"><path d="M0.7 0.9 L4.2 4 L0.7 7.1" fill="none" stroke="#111" stroke-width="1.45" stroke-linejoin="miter"/></svg>
<svg class="ab" style="left:29px;top:206px" width="16" height="16" viewBox="0 0 16 16"><path d="M0.5 1.6 Q0.5 0.6 1.5 0.6 L5 0.6 Q5.8 0.6 6 1.5 L14 1.5 Q14.8 1.5 14.8 2.4 L14.8 6 L0.5 6 Z" fill="#4a7cc4" stroke="#2f62aa" stroke-width=".9"/><path d="M1.3 1.6 L5 1.6 L5.3 2.6 L13.8 2.6 L13.8 3.6 L1.3 3.6 Z" fill="#6a98d8"/><path d="M0.5 4.4 L15.5 4.4 L15.5 13.6 Q15.5 14.5 14.6 14.5 L1.4 14.5 Q0.5 14.5 0.5 13.6 Z" fill="url(#fg)" stroke="#3a6ab0" stroke-width=".9"/><rect x="1" y="4.5" width="14" height="1" fill="#c0d8f6"/><rect x="0.9" y="10.9" width="14.2" height="1" fill="#2f62aa" opacity=".9"/></svg>
<span class="ab t" style="left:51.3px;top:204px;height:18px;line-height:18px;letter-spacing:0.203px;">patheos</span>
<div class="ab sel" style="left:26px;top:222px;width:170px;height:18px;"></div>
<svg class="ab" style="left:13px;top:226.7px" width="6" height="8" viewBox="0 0 6 8"><path d="M0.7 0.9 L4.2 4 L0.7 7.1" fill="none" stroke="#111" stroke-width="1.45" stroke-linejoin="miter"/></svg>
<svg class="ab" style="left:29px;top:224px" width="16" height="16" viewBox="0 0 16 16"><path d="M0.5 1.6 Q0.5 0.6 1.5 0.6 L5 0.6 Q5.8 0.6 6 1.5 L14 1.5 Q14.8 1.5 14.8 2.4 L14.8 6 L0.5 6 Z" fill="#4a7cc4" stroke="#2f62aa" stroke-width=".9"/><path d="M1.3 1.6 L5 1.6 L5.3 2.6 L13.8 2.6 L13.8 3.6 L1.3 3.6 Z" fill="#6a98d8"/><path d="M0.5 4.4 L15.5 4.4 L15.5 13.6 Q15.5 14.5 14.6 14.5 L1.4 14.5 Q0.5 14.5 0.5 13.6 Z" fill="url(#fg)" stroke="#3a6ab0" stroke-width=".9"/><rect x="1" y="4.5" width="14" height="1" fill="#c0d8f6"/><rect x="0.9" y="10.9" width="14.2" height="1" fill="#2f62aa" opacity=".9"/></svg>
<span class="ab t" style="left:51.3px;top:222px;height:18px;line-height:18px;letter-spacing:0.050px;">wordpress</span>
<svg class="ab" style="left:13px;top:244.7px" width="6" height="8" viewBox="0 0 6 8"><path d="M0.7 0.9 L4.2 4 L0.7 7.1" fill="none" stroke="#111" stroke-width="1.45" stroke-linejoin="miter"/></svg>
<svg class="ab" style="left:29px;top:242px" width="16" height="16" viewBox="0 0 16 16"><path d="M0.5 1.6 Q0.5 0.6 1.5 0.6 L5 0.6 Q5.8 0.6 6 1.5 L14 1.5 Q14.8 1.5 14.8 2.4 L14.8 6 L0.5 6 Z" fill="#4a7cc4" stroke="#2f62aa" stroke-width=".9"/><path d="M1.3 1.6 L5 1.6 L5.3 2.6 L13.8 2.6 L13.8 3.6 L1.3 3.6 Z" fill="#6a98d8"/><path d="M0.5 4.4 L15.5 4.4 L15.5 13.6 Q15.5 14.5 14.6 14.5 L1.4 14.5 Q0.5 14.5 0.5 13.6 Z" fill="url(#fg)" stroke="#3a6ab0" stroke-width=".9"/><rect x="1" y="4.5" width="14" height="1" fill="#c0d8f6"/><rect x="0.9" y="10.9" width="14.2" height="1" fill="#2f62aa" opacity=".9"/></svg>
<span class="ab tb" style="left:51px;top:240px;height:18px;line-height:18px;letter-spacing:0.133px;">blogspot (1)</span>
<svg class="ab" style="left:13px;top:262.7px" width="6" height="8" viewBox="0 0 6 8"><path d="M0.7 0.9 L4.2 4 L0.7 7.1" fill="none" stroke="#111" stroke-width="1.45" stroke-linejoin="miter"/></svg>
<svg class="ab" style="left:29px;top:260px" width="16" height="16" viewBox="0 0 16 16"><path d="M0.5 1.6 Q0.5 0.6 1.5 0.6 L5 0.6 Q5.8 0.6 6 1.5 L14 1.5 Q14.8 1.5 14.8 2.4 L14.8 6 L0.5 6 Z" fill="#4a7cc4" stroke="#2f62aa" stroke-width=".9"/><path d="M1.3 1.6 L5 1.6 L5.3 2.6 L13.8 2.6 L13.8 3.6 L1.3 3.6 Z" fill="#6a98d8"/><path d="M0.5 4.4 L15.5 4.4 L15.5 13.6 Q15.5 14.5 14.6 14.5 L1.4 14.5 Q0.5 14.5 0.5 13.6 Z" fill="url(#fg)" stroke="#3a6ab0" stroke-width=".9"/><rect x="1" y="4.5" width="14" height="1" fill="#c0d8f6"/><rect x="0.9" y="10.9" width="14.2" height="1" fill="#2f62aa" opacity=".9"/></svg>
<span class="ab t" style="left:51.3px;top:258px;height:18px;line-height:18px;letter-spacing:0.072px;">openSUSE</span>
<svg class="ab" style="left:13px;top:280.7px" width="6" height="8" viewBox="0 0 6 8"><path d="M0.7 0.9 L4.2 4 L0.7 7.1" fill="none" stroke="#111" stroke-width="1.45" stroke-linejoin="miter"/></svg>
<svg class="ab" style="left:29px;top:278px" width="16" height="16" viewBox="0 0 16 16"><path d="M0.5 1.6 Q0.5 0.6 1.5 0.6 L5 0.6 Q5.8 0.6 6 1.5 L14 1.5 Q14.8 1.5 14.8 2.4 L14.8 6 L0.5 6 Z" fill="#4a7cc4" stroke="#2f62aa" stroke-width=".9"/><path d="M1.3 1.6 L5 1.6 L5.3 2.6 L13.8 2.6 L13.8 3.6 L1.3 3.6 Z" fill="#6a98d8"/><path d="M0.5 4.4 L15.5 4.4 L15.5 13.6 Q15.5 14.5 14.6 14.5 L1.4 14.5 Q0.5 14.5 0.5 13.6 Z" fill="url(#fg)" stroke="#3a6ab0" stroke-width=".9"/><rect x="1" y="4.5" width="14" height="1" fill="#c0d8f6"/><rect x="0.9" y="10.9" width="14.2" height="1" fill="#2f62aa" opacity=".9"/></svg>
<span class="ab t" style="left:51.3px;top:276px;height:18px;line-height:18px;letter-spacing:-0.052px;">Imported Feeds</span>
<svg class="ab" style="left:13px;top:298.7px" width="6" height="8" viewBox="0 0 6 8"><path d="M0.7 0.9 L4.2 4 L0.7 7.1" fill="none" stroke="#111" stroke-width="1.45" stroke-linejoin="miter"/></svg>
<svg class="ab" style="left:29px;top:296px" width="16" height="16" viewBox="0 0 16 16"><path d="M0.5 1.6 Q0.5 0.6 1.5 0.6 L5 0.6 Q5.8 0.6 6 1.5 L14 1.5 Q14.8 1.5 14.8 2.4 L14.8 6 L0.5 6 Z" fill="#4a7cc4" stroke="#2f62aa" stroke-width=".9"/><path d="M1.3 1.6 L5 1.6 L5.3 2.6 L13.8 2.6 L13.8 3.6 L1.3 3.6 Z" fill="#6a98d8"/><path d="M0.5 4.4 L15.5 4.4 L15.5 13.6 Q15.5 14.5 14.6 14.5 L1.4 14.5 Q0.5 14.5 0.5 13.6 Z" fill="url(#fg)" stroke="#3a6ab0" stroke-width=".9"/><rect x="1" y="4.5" width="14" height="1" fill="#c0d8f6"/><rect x="0.9" y="10.9" width="14.2" height="1" fill="#2f62aa" opacity=".9"/></svg>
<span class="ab t" style="left:51.3px;top:294px;height:18px;line-height:18px;letter-spacing:-0.128px;">Imported</span>
<div class="ab " style="left:200px;top:207px;width:1px;height:1px;background:#aaa;box-shadow:0 3px 0 #aaa,0 6px 0 #aaa"></div>
<div class="ab " style="left:200px;top:459px;width:1px;height:1px;background:#aaa;box-shadow:0 3px 0 #aaa,0 6px 0 #aaa"></div>
<span class="ab t" style="left:204.5px;top:79px;letter-spacing:-0.041px;">Sea<u>r</u>ch:</span>
<div class="ab frame" style="left:259px;top:78px;width:519px;height:18px;border-color:#b0b0b0 #c4c4c4 #d8d8d8 #c4c4c4;box-shadow:inset 0 1px 1px rgba(0,0,0,.12)"></div>
<span class="ab t" style="left:785px;top:79px;letter-spacing:0.050px;">Status:</span>
<div class="ab " style="left:837px;top:77px;width:117px;height:20px;background:linear-gradient(#f8f8f8,#e6e6e6);border:1px solid #b9b9b9;border-radius:4px;box-shadow:0 1px 1px rgba(0,0,0,.25)"></div>
<svg class="ab" style="left:842px;top:79px" width="16" height="16" viewBox="0 0 16 16"><g fill="#c9c9c9" stroke="#aaa" stroke-width=".5"><circle cx="8" cy="8" r="6"/><rect x="6.5" y="0.5" width="3" height="15" rx="1"/><rect x="0.5" y="6.5" width="15" height="3" rx="1"/><rect x="6.5" y="0.5" width="3" height="15" rx="1" transform="rotate(45 8 8)"/><rect x="6.5" y="0.5" width="3" height="15" rx="1" transform="rotate(-45 8 8)"/></g><circle cx="8" cy="8" r="3.6" fill="#2d4fa0"/><circle cx="8" cy="8" r="1.7" fill="#dfe6f5"/></svg>
<span class="ab t" style="left:860.5px;top:79px;letter-spacing:-0.141px;">All Articles</span>
<svg class="ab" style="left:938px;top:84px" width="10" height="7" viewBox="0 0 10 7"><path d="M1 1.2 L5 5.4 L9 1.2" fill="none" stroke="#222" stroke-width="1.5" stroke-linecap="round" stroke-linejoin="round"/></svg>
<div class="ab frame" style="left:205px;top:108px;width:735px;height:246px;"></div>
<div class="ab " style="left:206px;top:109px;width:733px;height:18px;background:linear-gradient(#ececec,#e8e8e8);border-radius:2px 2px 0 0"></div>
<span class="ab t" style="left:208px;top:111px;">Title</span>
<span class="ab t" style="left:563px;top:111px;">Feed</span>
<span class="ab t" style="left:680px;top:111px;">Author</span>
<span class="ab t" style="left:787px;top:111px;">Date</span>
<div class="ab " style="left:558px;top:114px;width:1px;height:1px;background:#999;box-shadow:0 3px 0 #999,0 6px 0 #999"></div>
<div class="ab " style="left:675px;top:114px;width:1px;height:1px;background:#999;box-shadow:0 3px 0 #999,0 6px 0 #999"></div>
<div class="ab " style="left:782px;top:114px;width:1px;height:1px;background:#999;box-shadow:0 3px 0 #999,0 6px 0 #999"></div>
<div class="ab " style="left:923px;top:114px;width:1px;height:1px;background:#999;box-shadow:0 3px 0 #999,0 6px 0 #999"></div>
<svg class="ab" style="left:908px;top:115px" width="10" height="7" viewBox="0 0 10 7"><path d="M1 5.6 L5 1.4 L9 5.6" fill="none" stroke="#222" stroke-width="1.6" stroke-linecap="round" stroke-linejoin="round"/></svg>
<div class="ab" style="left:206px;top:129px;width:733px;height:224px;overflow:hidden">
<div class="ab sel" style="left:0px;top:0px;width:719px;height:14px;"></div>
<span class="ab t" style="left:1.7px;top:0px;height:14px;line-height:14px;letter-spacing:0.047px;">Polluting Youtube once again!</span>
<span class="ab t" style="left:357px;top:0px;height:14px;line-height:14px;letter-spacing:0.012px;">The Renaissanc...</span>
<span class="ab t" style="left:474px;top:0px;height:14px;line-height:14px;letter-spacing:-0.112px;">thonyc</span>
<span class="ab t" style="left:581px;top:0px;height:14px;line-height:14px;letter-spacing:-0.162px;">Today 09:46 AM</span>
<div class="ab " style="left:0px;top:14px;width:719px;height:14px;background:#f8f7f6"></div>
<span class="ab t" style="left:1.7px;top:14px;height:14px;line-height:14px;letter-spacing:-0.074px;">The handy-dandy Aslan/Affleck refuter</span>
<span class="ab t" style="left:357px;top:14px;height:14px;line-height:14px;letter-spacing:-0.284px;">Why Evolution I...</span>
<span class="ab t" style="left:474px;top:14px;height:14px;line-height:14px;letter-spacing:-0.276px;">whyevolutioni...</span>
<span class="ab t" style="left:581px;top:14px;height:14px;line-height:14px;letter-spacing:-0.162px;">Today 09:43 AM</span>
<span class="ab t" style="left:1.7px;top:28px;height:14px;line-height:14px;letter-spacing:-0.014px;">Readers' wildlife photos</span>
<span class="ab t" style="left:357px;top:28px;height:14px;line-height:14px;letter-spacing:-0.284px;">Why Evolution I...</span>
<span class="ab t" style="left:474px;top:28px;height:14px;line-height:14px;letter-spacing:-0.276px;">whyevolutioni...</span>
<span class="ab t" style="left:581px;top:28px;height:14px;line-height:14px;letter-spacing:-0.162px;">Today 07:50 AM</span>
<div class="ab " style="left:0px;top:42px;width:719px;height:14px;background:#f8f7f6"></div>
<span class="ab t" style="left:1.7px;top:42px;height:14px;line-height:14px;letter-spacing:0.043px;">First Nobel Prize of the year goes to three neuroscien...</span>
<span class="ab t" style="left:357px;top:42px;height:14px;line-height:14px;letter-spacing:-0.284px;">Why Evolution I...</span>
<span class="ab t" style="left:474px;top:42px;height:14px;line-height:14px;letter-spacing:-0.276px;">whyevolutioni...</span>
<span class="ab t" style="left:581px;top:42px;height:14px;line-height:14px;letter-spacing:-0.162px;">Today 07:24 AM</span>
<span class="ab t" style="left:1.7px;top:56px;height:14px;line-height:14px;letter-spacing:-0.070px;">Good morning!</span>
<span class="ab t" style="left:357px;top:56px;height:14px;line-height:14px;letter-spacing:-0.284px;">Why Evolution I...</span>
<span class="ab t" style="left:474px;top:56px;height:14px;line-height:14px;letter-spacing:-0.276px;">whyevolutioni...</span>
<span class="ab t" style="left:581px;top:56px;height:14px;line-height:14px;letter-spacing:-0.162px;">Today 06:31 AM</span>
<div class="ab " style="left:0px;top:70px;width:719px;height:14px;background:#f8f7f6"></div>
<span class="ab t" style="left:1.7px;top:70px;height:14px;line-height:14px;letter-spacing:-0.117px;">Monday: Hili dialogue</span>
<span class="ab t" style="left:357px;top:70px;height:14px;line-height:14px;letter-spacing:-0.284px;">Why Evolution I...</span>
<span class="ab t" style="left:474px;top:70px;height:14px;line-height:14px;letter-spacing:-0.276px;">whyevolutioni...</span>
<span class="ab t" style="left:581px;top:70px;height:14px;line-height:14px;letter-spacing:-0.162px;">Today 04:58 AM</span>
<span class="ab t" style="left:1.7px;top:84px;height:14px;line-height:14px;letter-spacing:-0.032px;">Ex-ACE students have their say</span>
<span class="ab t" style="left:357px;top:84px;height:14px;line-height:14px;letter-spacing:-0.142px;">Leaving Funda...</span>
<span class="ab t" style="left:474px;top:84px;height:14px;line-height:14px;letter-spacing:-0.168px;">Jonny Scaram...</span>
<span class="ab t" style="left:581px;top:84px;height:14px;line-height:14px;letter-spacing:-0.162px;">Today 03:00 AM</span>
<div class="ab " style="left:0px;top:98px;width:719px;height:14px;background:#f8f7f6"></div>
<span class="ab t" style="left:1.7px;top:98px;height:14px;line-height:14px;letter-spacing:-0.044px;">Sunday Poetry: Less Murray (2)</span>
<span class="ab t" style="left:357px;top:98px;height:14px;line-height:14px;letter-spacing:-0.032px;">Triangulations</span>
<span class="ab t" style="left:474px;top:98px;height:14px;line-height:14px;letter-spacing:-0.067px;">Sabio Lantz</span>
<span class="ab t" style="left:581px;top:98px;height:14px;line-height:14px;letter-spacing:-0.044px;">Yesterday 08:32 PM</span>
<span class="ab t" style="left:1.7px;top:112px;height:14px;line-height:14px;letter-spacing:0.019px;">How cats have trained us to pet them</span>
<span class="ab t" style="left:357px;top:112px;height:14px;line-height:14px;letter-spacing:-0.284px;">Why Evolution I...</span>
<span class="ab t" style="left:474px;top:112px;height:14px;line-height:14px;letter-spacing:-0.276px;">whyevolutioni...</span>
<span class="ab t" style="left:581px;top:112px;height:14px;line-height:14px;letter-spacing:-0.044px;">Yesterday 04:58 PM</span>
<div class="ab " style="left:0px;top:126px;width:719px;height:14px;background:#f8f7f6"></div>
<span class="ab t" style="left:1.7px;top:126px;height:14px;line-height:14px;letter-spacing:0.079px;">Here's the caterpillar!</span>
<span class="ab t" style="left:357px;top:126px;height:14px;line-height:14px;letter-spacing:-0.284px;">Why Evolution I...</span>
<span class="ab t" style="left:474px;top:126px;height:14px;line-height:14px;letter-spacing:-0.276px;">whyevolutioni...</span>
<span class="ab t" style="left:581px;top:126px;height:14px;line-height:14px;letter-spacing:-0.044px;">Yesterday 03:30 PM</span>
<span class="ab t" style="left:1.7px;top:140px;height:14px;line-height:14px;letter-spacing:-0.042px;">The divine Sarah on SNL</span>
<span class="ab t" style="left:357px;top:140px;height:14px;line-height:14px;letter-spacing:-0.284px;">Why Evolution I...</span>
<span class="ab t" style="left:474px;top:140px;height:14px;line-height:14px;letter-spacing:-0.276px;">whyevolutioni...</span>
<span class="ab t" style="left:581px;top:140px;height:14px;line-height:14px;letter-spacing:-0.044px;">Yesterday 02:37 PM</span>
<div class="ab " style="left:0px;top:154px;width:719px;height:14px;background:#f8f7f6"></div>
<span class="ab t" style="left:1.7px;top:154px;height:14px;line-height:14px;letter-spacing:-0.089px;">The Odd Couple: Ray Comfort &amp; Albert Einstein</span>
<span class="ab t" style="left:357px;top:154px;height:14px;line-height:14px;letter-spacing:0.076px;">The Sensuous ...</span>
<span class="ab t" style="left:474px;top:154px;height:14px;line-height:14px;letter-spacing:-0.149px;">The Curmudg...</span>
<span class="ab t" style="left:581px;top:154px;height:14px;line-height:14px;letter-spacing:-0.044px;">Yesterday 02:32 PM</span>
<span class="ab t" style="left:1.7px;top:168px;height:14px;line-height:14px;letter-spacing:-0.022px;">Jesus-fellated teen receives probation, community se...</span>
<span class="ab t" style="left:357px;top:168px;height:14px;line-height:14px;letter-spacing:-0.284px;">Why Evolution I...</span>
<span class="ab t" style="left:474px;top:168px;height:14px;line-height:14px;letter-spacing:-0.276px;">whyevolutioni...</span>
<span class="ab t" style="left:581px;top:168px;height:14px;line-height:14px;letter-spacing:-0.044px;">Yesterday 01:01 PM</span>
<div class="ab " style="left:0px;top:182px;width:719px;height:14px;background:#f8f7f6"></div>
<span class="ab t" style="left:1.7px;top:182px;height:14px;line-height:14px;letter-spacing:0.220px;">More "grocer's apostrophes"</span>
<span class="ab t" style="left:357px;top:182px;height:14px;line-height:14px;letter-spacing:-0.284px;">Why Evolution I...</span>
<span class="ab t" style="left:474px;top:182px;height:14px;line-height:14px;letter-spacing:-0.276px;">whyevolutioni...</span>
<span class="ab t" style="left:581px;top:182px;height:14px;line-height:14px;letter-spacing:-0.100px;">Yesterday 11:14 AM</span>
<span class="ab t" style="left:1.7px;top:196px;height:14px;line-height:14px;letter-spacing:0.075px;">Spot the caterpillar</span>
<span class="ab t" style="left:357px;top:196px;height:14px;line-height:14px;letter-spacing:-0.284px;">Why Evolution I...</span>
<span class="ab t" style="left:474px;top:196px;height:14px;line-height:14px;letter-spacing:-0.276px;">whyevolutioni...</span>
<span class="ab t" style="left:581px;top:196px;height:14px;line-height:14px;letter-spacing:-0.100px;">Yesterday 11:02 AM</span>
<div class="ab " style="left:0px;top:210px;width:719px;height:14px;background:#f8f7f6"></div>
<span class="ab t" style="left:1.7px;top:210px;height:14px;line-height:14px;letter-spacing:-0.052px;">John Gray's Poor Thinking on Dawkins</span>
<span class="ab t" style="left:357px;top:210px;height:14px;line-height:14px;letter-spacing:-0.189px;">Ramblings</span>
<span class="ab t" style="left:474px;top:210px;height:14px;line-height:14px;letter-spacing:-0.208px;">Ron Murphy</span>
<span class="ab t" style="left:581px;top:210px;height:14px;line-height:14px;letter-spacing:-0.100px;">Yesterday 10:27 AM</span>
</div>
<svg class="ab" style="left:943px;top:111px" width="10" height="7" viewBox="0 0 10 7"><path d="M1 5.6 L5 1.4 L9 5.6" fill="none" stroke="#8a8a8a" stroke-width="1.4" stroke-linecap="round" stroke-linejoin="round"/></svg>
<div class="ab " style="left:942px;top:122px;width:13px;height:204px;border:1px solid #8a8a8a;border-radius:4px;background:linear-gradient(90deg,#a6a6a6,#b8b8b8 50%,#b0b0b0)"></div>
<div class="ab " style="left:943px;top:123px;width:11px;height:16px;border:1px solid #8e8e8e;border-radius:3px;background:linear-gradient(90deg,#dcdcdc,#fafafa 50%,#e2e2e2)"></div>
<div class="ab " style="left:957px;top:311px;width:1px;height:1px;background:#999;box-shadow:0 3px 0 #999,0 6px 0 #999"></div>
<svg class="ab" style="left:943px;top:328px" width="10" height="7" viewBox="0 0 10 7"><path d="M1 5.6 L5 1.4 L9 5.6" fill="none" stroke="#8a8a8a" stroke-width="1.4" stroke-linecap="round" stroke-linejoin="round"/></svg>
<svg class="ab" style="left:943px;top:342px" width="10" height="7" viewBox="0 0 10 7"><path d="M1 1.2 L5 5.4 L9 1.2" fill="none" stroke="#555" stroke-width="1.4" stroke-linecap="round" stroke-linejoin="round"/></svg>
<div class="ab " style="left:326px;top:357px;width:1px;height:1px;background:#aaa;box-shadow:3px 0 0 #aaa,6px 0 0 #aaa"></div>
<div class="ab " style="left:576px;top:357px;width:1px;height:1px;background:#aaa;box-shadow:3px 0 0 #aaa,6px 0 0 #aaa"></div>
<div class="ab " style="left:826px;top:357px;width:1px;height:1px;background:#aaa;box-shadow:3px 0 0 #aaa,6px 0 0 #aaa"></div>
<div class="ab frame" style="left:205px;top:362px;width:750px;height:238px;"></div>
<div class="ab " style="left:215px;top:372px;width:729px;height:48px;border:1px solid #000;background:#e6e6e6;border-radius:0"></div>
<div class="ab " style="left:216px;top:373px;width:727px;height:18px;background:#00a388"></div>
<span class="ab t b" style="left:217.8px;top:372.5px;height:17px;line-height:17px;color:#fff;">Polluting Youtube once again!</span>
<span class="ab t b" style="left:217.8px;top:390px;height:15px;line-height:15px;letter-spacing:0.027px;">Date:</span>
<span class="ab t" style="left:263.8px;top:390px;height:15px;line-height:15px;letter-spacing:-0.162px;">Today 09:46 AM</span>
<span class="ab t b" style="left:217.8px;top:404px;height:15px;line-height:15px;letter-spacing:-0.086px;">Author:</span>
<span class="ab t" style="left:277.8px;top:404px;height:15px;line-height:15px;letter-spacing:-0.095px;">thonyc</span>
<span class="ab t" style="left:215px;top:432px;letter-spacing:0.051px;">Professor Christopher M Graney, Renaissance Mathematicus friend and guest blogger, has posted another of his</span>
<span class="ab t" style="left:215px;top:446px;letter-spacing:-0.041px;">holiday videos on Youtube, documenting parts of his visit to Nürnberg and Bamberg for the  <a>Astronomy in Franconia</a></span>
<span class="ab t" style="left:215px;top:460px;letter-spacing:-0.020px;"><a>Conferences</a>. In his new video <a>"Nürnberg and Bamberg"</a> you can see the Behaim Globe (<a>Martin Behaim celebrates</a></span>
<span class="ab t" style="left:215px;top:478px;letter-spacing:-0.022px;"><a>his 555<sup style="font-size:11px;line-height:0;vertical-align:5px">th</sup> birthday today!</a>), <a>the Frauenkirche Clock (1509)</a> doing its thing, and yours truly wittering on about</span>
<span class="ab t" style="left:215px;top:492px;letter-spacing:0.044px;"><a>Johannes Petreius and Copernicus' <i>De revolutionibus</i> </a>(4.11–6.56)</span>
<span class="ab mono" style="left:215px;top:537.8px;color:#2424c8;font-family:'DejaVu Sans Mono','Liberation Mono',monospace;font-size:10px;letter-spacing:-0.05px;">Add a Comment</span>
<span class="ab t" style="left:215px;top:563px;letter-spacing:-0.111px;"><a>Complete Story</a></span>
<div class="ab " style="left:948px;top:596px;width:12px;height:10px;background:#d0d0d0;border:1px solid #999;border-radius:2px 0 0 0"></div>
</div>
<div class="ab" id="wx" style="left:948px;top:585px;width:385px;height:285px;background:#cacaca;border:1px solid #44555c;border-radius:2px">
<div class="ab " style="left:7px;top:8px;width:367px;height:57px;background:#acacae;border-radius:3px"></div>
<svg class="ab" style="left:7px;top:8px" width="60" height="42" viewBox="0 0 60 40"><defs><filter id="hz7" x="-20%" y="-50%" width="140%" height="200%"><feGaussianBlur stdDeviation="0.9"/></filter><filter id="hy7" x="-30%" y="-30%" width="160%" height="160%"><feGaussianBlur stdDeviation="2"/></filter></defs><circle cx="32" cy="19.5" r="14.5" fill="#ffd24a" opacity=".35" filter="url(#hy7)"/><path d="M43.9,20.7L47.1,21.0M43.4,23.3L48.0,24.9M42.2,25.8L47.8,29.2M40.6,27.9L43.5,30.7M38.5,29.6L41.6,34.3M36.1,30.8L37.2,33.8M33.5,31.4L34.1,36.2M30.8,31.4L30.2,37.9M28.2,30.9L26.9,34.7M25.7,29.7L22.8,34.6M23.6,28.1L21.4,30.4M21.9,26.0L17.9,28.6M20.7,23.6L14.6,25.8M20.1,21.0L16.1,21.5M20.1,18.3L14.4,17.7M20.6,15.7L17.6,14.7M21.8,13.2L17.6,10.7M23.4,11.1L18.8,6.6M25.5,9.4L23.3,6.1M27.9,8.2L26.0,2.9M30.5,7.6L30.1,4.4M33.2,7.6L33.7,2.7M35.8,8.1L37.9,2.0M38.3,9.3L40.3,5.8M40.4,10.9L44.3,6.9M42.1,13.0L44.7,11.3M43.3,15.4L47.8,13.7M43.9,18.0L50.4,17.2" stroke="#f6b830" stroke-opacity="0.55" stroke-width="0.5" fill="none"/><circle cx="32" cy="19.5" r="12.3" fill="url(#sun)" stroke="#e39300" stroke-width=".9"/><g filter="url(#hz7)" fill="#fff"><ellipse cx="30" cy="24.5" rx="13" ry="3" opacity=".65"/><ellipse cx="32" cy="29" rx="12" ry="4" opacity=".6"/><ellipse cx="16" cy="27" rx="14" ry="1.6" opacity=".8"/><ellipse cx="22" cy="31.5" rx="15" ry="1.7" opacity=".75"/><ellipse cx="44" cy="25" rx="13" ry="1.5" opacity=".8"/><ellipse cx="46" cy="30" rx="11" ry="1.3" opacity=".6"/><ellipse cx="20" cy="34.5" rx="10" ry="1.3" opacity=".7"/><ellipse cx="34" cy="33" rx="9" ry="1.6" opacity=".6"/></g></svg>
<span class="ab b" style="left:84px;top:14.299999999999955px;font-size:15.5px;line-height:19px;color:#3a3f45;letter-spacing:0.044px;">Chicago / West Chic...</span>
<span class="ab b" style="left:328.5px;top:14.299999999999955px;font-size:15.5px;line-height:19px;color:#3a3f45;letter-spacing:0.195px;">54°F</span>
<span class="ab t" style="left:84px;top:42px;color:#3d3d3d;letter-spacing:-0.178px;">A Few Clouds</span>
<span class="ab s" style="left:283px;top:43px;color:#3d3d3d;letter-spacing:0.206px;">H: 58°F L: 45°F</span>
<div class="ab " style="left:82.5px;top:71.5px;width:217px;height:28px;background:linear-gradient(#bdbdbf,#c2c2c4);border:1px solid #a4a4a8;border-radius:4px"></div>
<div class="ab " style="left:85px;top:74px;width:105px;height:24px;background:#bfc5c8;border:1px solid #3f4e58;border-radius:3.5px"></div>
<span class="ab t" style="left:85px;top:78px;width:105px;text-align:center;color:#3a3a3a">6 Days</span>
<span class="ab t" style="left:190px;top:78px;width:107px;text-align:center;color:#3a3a3a">Details</span>
<div class="ab " style="left:3px;top:113px;width:366px;height:18px;background:#bfbfbf;border-radius:5px"></div>
<div class="ab " style="left:3px;top:151px;width:366px;height:18px;background:#b5b5b7;border-radius:5px"></div>
<div class="ab " style="left:3px;top:189px;width:366px;height:18px;background:#a7a8ab;border-radius:5px"></div>
<div class="ab " style="left:3px;top:227px;width:366px;height:18px;background:#9a9b9f;border-radius:5px"></div>
<span class="ab t b" style="left:2.5px;top:113.5px;width:60px;text-align:center;color:#3c4045">6</span>
<svg class="ab" style="left:12.5px;top:141px" width="40" height="44" viewBox="0 0 40 44"><path d="M32.8,14.0L33.8,14.1M32.1,16.4L34.0,17.2M30.8,18.5L33.0,20.5M28.8,20.1L29.6,21.4M26.5,21.0L27.0,23.5M24.0,21.2L23.9,22.2M21.6,20.5L20.8,22.4M19.5,19.2L17.5,21.4M17.9,17.2L16.6,18.0M17.0,14.9L14.5,15.4M16.8,12.4L15.8,12.3M17.5,10.0L15.6,9.2M18.8,7.9L16.6,5.9M20.8,6.3L20.0,5.0M23.1,5.4L22.6,2.9M25.6,5.2L25.7,4.2M28.0,5.9L28.8,4.0M30.1,7.2L32.1,5.0M31.7,9.2L33.0,8.4M32.6,11.5L35.1,11.0" stroke="#f6b830" stroke-opacity="0.6" stroke-width="0.5" fill="none"/><circle cx="24.8" cy="13.2" r="8" fill="url(#sun)" stroke="#e39300" stroke-width=".8"/><g><ellipse cx="19.5" cy="24.2" rx="16.5" ry="2" fill="#9a9aa0" opacity=".7"/><circle cx="9.5" cy="18.5" r="6.2" fill="url(#cl)"/><circle cx="15.5" cy="14.8" r="5.6" fill="url(#cl)"/><circle cx="22" cy="16.5" r="6" fill="url(#cl)"/><circle cx="28" cy="19" r="5.6" fill="url(#cl)"/><circle cx="32" cy="20.5" r="4.6" fill="url(#cl)"/><circle cx="6" cy="15.5" r="3.8" fill="url(#cl)"/><circle cx="5.5" cy="19.5" r="4" fill="url(#cl)"/><ellipse cx="19" cy="21.5" rx="16.3" ry="3.6" fill="#d9d9dd"/><ellipse cx="16" cy="17" rx="9" ry="4" fill="#efeff1" opacity=".8"/></g><path d="M15.5,24.8 q1.5,2.2 0,3.2 q-1.5,-1.1 0,-3.2z" fill="#4f86c6"/><path d="M21.5,24.8 q1.5,2.2 0,3.2 q-1.5,-1.1 0,-3.2z" fill="#4f86c6"/><path d="M26.8,25.4 q1.5,2.2 0,3.2 q-1.5,-1.1 0,-3.2z" fill="#4f86c6"/><path d="M30.0,24.1 q1.5,2.2 0,3.2 q-1.5,-1.1 0,-3.2z" fill="#4f86c6"/><path d="M32.7,25.4 q1.5,2.2 0,3.2 q-1.5,-1.1 0,-3.2z" fill="#4f86c6"/><path d="M12.9,28.1 q1.5,2.2 0,3.2 q-1.5,-1.1 0,-3.2z" fill="#4f86c6"/><path d="M17.5,28.1 q1.5,2.2 0,3.2 q-1.5,-1.1 0,-3.2z" fill="#4f86c6"/><path d="M23.5,31.4 q1.5,2.2 0,3.2 q-1.5,-1.1 0,-3.2z" fill="#4f86c6"/><path d="M29.4,30.4 q1.5,2.2 0,3.2 q-1.5,-1.1 0,-3.2z" fill="#4f86c6"/><path d="M11.6,32.4 q1.5,2.2 0,3.2 q-1.5,-1.1 0,-3.2z" fill="#4f86c6"/><path d="M17.5,34.7 q1.5,2.2 0,3.2 q-1.5,-1.1 0,-3.2z" fill="#4f86c6"/><path d="M4.6,33.1 q1.5,2.2 0,3.2 q-1.5,-1.1 0,-3.2z" fill="#4f86c6"/></svg>
<span class="ab t" style="left:2.5px;top:189.5px;width:60px;text-align:center;color:#3a3a3a;letter-spacing:-0.2px">58°F</span>
<span class="ab t" style="left:2.5px;top:227.5px;width:60px;text-align:center;color:#3a3a3a;letter-spacing:-0.2px">45°F</span>
<span class="ab t b" style="left:63.5px;top:113.5px;width:60px;text-align:center;color:#3c4045">7</span>
<svg class="ab" style="left:73.5px;top:141px" width="40" height="44" viewBox="0 0 40 44"><path d="M32.2,13.4L33.2,13.5M31.5,15.8L33.4,16.6M30.2,17.9L32.4,19.9M28.2,19.5L29.0,20.8M25.9,20.4L26.4,22.9M23.4,20.6L23.3,21.6M21.0,19.9L20.2,21.8M18.9,18.6L16.9,20.8M17.3,16.6L16.0,17.4M16.4,14.3L13.9,14.8M16.2,11.8L15.2,11.7M16.9,9.4L15.0,8.6M18.2,7.3L16.0,5.3M20.2,5.7L19.4,4.4M22.5,4.8L22.0,2.3M25.0,4.6L25.1,3.6M27.4,5.3L28.2,3.4M29.5,6.6L31.5,4.4M31.1,8.6L32.4,7.8M32.0,10.9L34.5,10.4" stroke="#f6b830" stroke-opacity="0.6" stroke-width="0.5" fill="none"/><circle cx="24.2" cy="12.6" r="8" fill="url(#sun)" stroke="#e39300" stroke-width=".8"/><g><ellipse cx="19.5" cy="26.5" rx="16.5" ry="2" fill="#9a9aa0" opacity=".7"/><circle cx="9.5" cy="20.8" r="6.2" fill="url(#cl)"/><circle cx="15.5" cy="17.1" r="5.6" fill="url(#cl)"/><circle cx="22" cy="18.8" r="6" fill="url(#cl)"/><circle cx="28" cy="21.3" r="5.6" fill="url(#cl)"/><circle cx="32" cy="22.8" r="4.6" fill="url(#cl)"/><circle cx="6" cy="17.8" r="3.8" fill="url(#cl)"/><circle cx="5.5" cy="21.8" r="4" fill="url(#cl)"/><ellipse cx="19" cy="23.8" rx="16.3" ry="3.6" fill="#d9d9dd"/><ellipse cx="16" cy="19.3" rx="9" ry="4" fill="#efeff1" opacity=".8"/></g></svg>
<span class="ab t" style="left:63.5px;top:189.5px;width:60px;text-align:center;color:#3a3a3a;letter-spacing:-0.2px">65°F</span>
<span class="ab t" style="left:63.5px;top:227.5px;width:60px;text-align:center;color:#3a3a3a;letter-spacing:-0.2px">42°F</span>
<span class="ab t b" style="left:124.5px;top:113.5px;width:60px;text-align:center;color:#3c4045">8</span>
<svg class="ab" style="left:134.5px;top:141px" width="40" height="44" viewBox="0 0 40 44"><g><ellipse cx="19.5" cy="24.2" rx="16.5" ry="2" fill="#9a9aa0" opacity=".7"/><circle cx="9.5" cy="18.5" r="6.2" fill="url(#cl)"/><circle cx="15.5" cy="14.8" r="5.6" fill="url(#cl)"/><circle cx="22" cy="16.5" r="6" fill="url(#cl)"/><circle cx="28" cy="19" r="5.6" fill="url(#cl)"/><circle cx="32" cy="20.5" r="4.6" fill="url(#cl)"/><circle cx="6" cy="15.5" r="3.8" fill="url(#cl)"/><circle cx="5.5" cy="19.5" r="4" fill="url(#cl)"/><ellipse cx="19" cy="21.5" rx="16.3" ry="3.6" fill="#d9d9dd"/><ellipse cx="16" cy="17" rx="9" ry="4" fill="#efeff1" opacity=".8"/></g><path d="M10.5,25.3 q1.2,1.8 0,2.6 q-1.2,-0.9 0,-2.6z" fill="#5a8fcc"/><path d="M13.8,24.8 q1.2,1.8 0,2.6 q-1.2,-0.9 0,-2.6z" fill="#5a8fcc"/><path d="M15.9,24.8 q1.2,1.8 0,2.6 q-1.2,-0.9 0,-2.6z" fill="#5a8fcc"/><path d="M19.2,25.3 q1.2,1.8 0,2.6 q-1.2,-0.9 0,-2.6z" fill="#5a8fcc"/><path d="M21.3,24.8 q1.2,1.8 0,2.6 q-1.2,-0.9 0,-2.6z" fill="#5a8fcc"/><path d="M24.6,24.8 q1.2,1.8 0,2.6 q-1.2,-0.9 0,-2.6z" fill="#5a8fcc"/><path d="M26.7,25.3 q1.2,1.8 0,2.6 q-1.2,-0.9 0,-2.6z" fill="#5a8fcc"/><path d="M30.0,24.8 q1.2,1.8 0,2.6 q-1.2,-0.9 0,-2.6z" fill="#5a8fcc"/><path d="M32.1,24.8 q1.2,1.8 0,2.6 q-1.2,-0.9 0,-2.6z" fill="#5a8fcc"/><path d="M35.4,25.3 q1.2,1.8 0,2.6 q-1.2,-0.9 0,-2.6z" fill="#5a8fcc"/><path d="M9.6,28.2 q1.2,1.8 0,2.6 q-1.2,-0.9 0,-2.6z" fill="#5a8fcc"/><path d="M12.9,27.7 q1.2,1.8 0,2.6 q-1.2,-0.9 0,-2.6z" fill="#5a8fcc"/><path d="M15.0,27.7 q1.2,1.8 0,2.6 q-1.2,-0.9 0,-2.6z" fill="#5a8fcc"/><path d="M18.3,28.2 q1.2,1.8 0,2.6 q-1.2,-0.9 0,-2.6z" fill="#5a8fcc"/><path d="M20.4,27.7 q1.2,1.8 0,2.6 q-1.2,-0.9 0,-2.6z" fill="#5a8fcc"/><path d="M23.7,27.7 q1.2,1.8 0,2.6 q-1.2,-0.9 0,-2.6z" fill="#5a8fcc"/><path d="M25.8,28.2 q1.2,1.8 0,2.6 q-1.2,-0.9 0,-2.6z" fill="#5a8fcc"/><path d="M29.1,27.7 q1.2,1.8 0,2.6 q-1.2,-0.9 0,-2.6z" fill="#5a8fcc"/><path d="M31.2,27.7 q1.2,1.8 0,2.6 q-1.2,-0.9 0,-2.6z" fill="#5a8fcc"/><path d="M8.7,31.1 q1.2,1.8 0,2.6 q-1.2,-0.9 0,-2.6z" fill="#5a8fcc"/><path d="M12.0,30.6 q1.2,1.8 0,2.6 q-1.2,-0.9 0,-2.6z" fill="#5a8fcc"/><path d="M14.1,30.6 q1.2,1.8 0,2.6 q-1.2,-0.9 0,-2.6z" fill="#5a8fcc"/><path d="M17.4,31.1 q1.2,1.8 0,2.6 q-1.2,-0.9 0,-2.6z" fill="#5a8fcc"/><path d="M19.5,30.6 q1.2,1.8 0,2.6 q-1.2,-0.9 0,-2.6z" fill="#5a8fcc"/><path d="M22.8,30.6 q1.2,1.8 0,2.6 q-1.2,-0.9 0,-2.6z" fill="#5a8fcc"/><path d="M24.9,31.1 q1.2,1.8 0,2.6 q-1.2,-0.9 0,-2.6z" fill="#5a8fcc"/><path d="M28.2,30.6 q1.2,1.8 0,2.6 q-1.2,-0.9 0,-2.6z" fill="#5a8fcc"/><path d="M7.8,34.0 q1.2,1.8 0,2.6 q-1.2,-0.9 0,-2.6z" fill="#5a8fcc"/><path d="M11.1,33.5 q1.2,1.8 0,2.6 q-1.2,-0.9 0,-2.6z" fill="#5a8fcc"/><path d="M13.2,33.5 q1.2,1.8 0,2.6 q-1.2,-0.9 0,-2.6z" fill="#5a8fcc"/><path d="M16.5,34.0 q1.2,1.8 0,2.6 q-1.2,-0.9 0,-2.6z" fill="#5a8fcc"/><path d="M18.6,33.5 q1.2,1.8 0,2.6 q-1.2,-0.9 0,-2.6z" fill="#5a8fcc"/><path d="M21.9,33.5 q1.2,1.8 0,2.6 q-1.2,-0.9 0,-2.6z" fill="#5a8fcc"/><path d="M24.0,34.0 q1.2,1.8 0,2.6 q-1.2,-0.9 0,-2.6z" fill="#5a8fcc"/></svg>
<span class="ab t" style="left:124.5px;top:189.5px;width:60px;text-align:center;color:#3a3a3a;letter-spacing:-0.2px">61°F</span>
<span class="ab t" style="left:124.5px;top:227.5px;width:60px;text-align:center;color:#3a3a3a;letter-spacing:-0.2px">45°F</span>
<span class="ab t b" style="left:185.5px;top:113.5px;width:60px;text-align:center;color:#3c4045">9</span>
<svg class="ab" style="left:195.5px;top:141px" width="40" height="44" viewBox="0 0 40 44"><g><ellipse cx="19.5" cy="24.2" rx="16.5" ry="2" fill="#9a9aa0" opacity=".7"/><circle cx="9.5" cy="18.5" r="6.2" fill="url(#cl)"/><circle cx="15.5" cy="14.8" r="5.6" fill="url(#cl)"/><circle cx="22" cy="16.5" r="6" fill="url(#cl)"/><circle cx="28" cy="19" r="5.6" fill="url(#cl)"/><circle cx="32" cy="20.5" r="4.6" fill="url(#cl)"/><circle cx="6" cy="15.5" r="3.8" fill="url(#cl)"/><circle cx="5.5" cy="19.5" r="4" fill="url(#cl)"/><ellipse cx="19" cy="21.5" rx="16.3" ry="3.6" fill="#d9d9dd"/><ellipse cx="16" cy="17" rx="9" ry="4" fill="#efeff1" opacity=".8"/></g><path d="M10.5,25.3 q1.2,1.8 0,2.6 q-1.2,-0.9 0,-2.6z" fill="#5a8fcc"/><path d="M13.8,24.8 q1.2,1.8 0,2.6 q-1.2,-0.9 0,-2.6z" fill="#5a8fcc"/><path d="M15.9,24.8 q1.2,1.8 0,2.6 q-1.2,-0.9 0,-2.6z" fill="#5a8fcc"/><path d="M19.2,25.3 q1.2,1.8 0,2.6 q-1.2,-0.9 0,-2.6z" fill="#5a8fcc"/><path d="M21.3,24.8 q1.2,1.8 0,2.6 q-1.2,-0.9 0,-2.6z" fill="#5a8fcc"/><path d="M24.6,24.8 q1.2,1.8 0,2.6 q-1.2,-0.9 0,-2.6z" fill="#5a8fcc"/><path d="M26.7,25.3 q1.2,1.8 0,2.6 q-1.2,-0.9 0,-2.6z" fill="#5a8fcc"/><path d="M30.0,24.8 q1.2,1.8 0,2.6 q-1.2,-0.9 0,-2.6z" fill="#5a8fcc"/><path d="M32.1,24.8 q1.2,1.8 0,2.6 q-1.2,-0.9 0,-2.6z" fill="#5a8fcc"/><path d="M35.4,25.3 q1.2,1.8 0,2.6 q-1.2,-0.9 0,-2.6z" fill="#5a8fcc"/><path d="M9.6,28.2 q1.2,1.8 0,2.6 q-1.2,-0.9 0,-2.6z" fill="#5a8fcc"/><path d="M12.9,27.7 q1.2,1.8 0,2.6 q-1.2,-0.9 0,-2.6z" fill="#5a8fcc"/><path d="M15.0,27.7 q1.2,1.8 0,2.6 q-1.2,-0.9 0,-2.6z" fill="#5a8fcc"/><path d="M18.3,28.2 q1.2,1.8 0,2.6 q-1.2,-0.9 0,-2.6z" fill="#5a8fcc"/><path d="M20.4,27.7 q1.2,1.8 0,2.6 q-1.2,-0.9 0,-2.6z" fill="#5a8fcc"/><path d="M23.7,27.7 q1.2,1.8 0,2.6 q-1.2,-0.9 0,-2.6z" fill="#5a8fcc"/><path d="M25.8,28.2 q1.2,1.8 0,2.6 q-1.2,-0.9 0,-2.6z" fill="#5a8fcc"/><path d="M29.1,27.7 q1.2,1.8 0,2.6 q-1.2,-0.9 0,-2.6z" fill="#5a8fcc"/><path d="M31.2,27.7 q1.2,1.8 0,2.6 q-1.2,-0.9 0,-2.6z" fill="#5a8fcc"/><path d="M8.7,31.1 q1.2,1.8 0,2.6 q-1.2,-0.9 0,-2.6z" fill="#5a8fcc"/><path d="M12.0,30.6 q1.2,1.8 0,2.6 q-1.2,-0.9 0,-2.6z" fill="#5a8fcc"/><path d="M14.1,30.6 q1.2,1.8 0,2.6 q-1.2,-0.9 0,-2.6z" fill="#5a8fcc"/><path d="M17.4,31.1 q1.2,1.8 0,2.6 q-1.2,-0.9 0,-2.6z" fill="#5a8fcc"/><path d="M19.5,30.6 q1.2,1.8 0,2.6 q-1.2,-0.9 0,-2.6z" fill="#5a8fcc"/><path d="M22.8,30.6 q1.2,1.8 0,2.6 q-1.2,-0.9 0,-2.6z" fill="#5a8fcc"/><path d="M24.9,31.1 q1.2,1.8 0,2.6 q-1.2,-0.9 0,-2.6z" fill="#5a8fcc"/><path d="M28.2,30.6 q1.2,1.8 0,2.6 q-1.2,-0.9 0,-2.6z" fill="#5a8fcc"/><path d="M7.8,34.0 q1.2,1.8 0,2.6 q-1.2,-0.9 0,-2.6z" fill="#5a8fcc"/><path d="M11.1,33.5 q1.2,1.8 0,2.6 q-1.2,-0.9 0,-2.6z" fill="#5a8fcc"/><path d="M13.2,33.5 q1.2,1.8 0,2.6 q-1.2,-0.9 0,-2.6z" fill="#5a8fcc"/><path d="M16.5,34.0 q1.2,1.8 0,2.6 q-1.2,-0.9 0,-2.6z" fill="#5a8fcc"/><path d="M18.6,33.5 q1.2,1.8 0,2.6 q-1.2,-0.9 0,-2.6z" fill="#5a8fcc"/><path d="M21.9,33.5 q1.2,1.8 0,2.6 q-1.2,-0.9 0,-2.6z" fill="#5a8fcc"/><path d="M24.0,34.0 q1.2,1.8 0,2.6 q-1.2,-0.9 0,-2.6z" fill="#5a8fcc"/></svg>
<span class="ab t" style="left:185.5px;top:189.5px;width:60px;text-align:center;color:#3a3a3a;letter-spacing:-0.2px">58°F</span>
<span class="ab t" style="left:185.5px;top:227.5px;width:60px;text-align:center;color:#3a3a3a;letter-spacing:-0.2px">41°F</span>
<span class="ab t b" style="left:246.5px;top:113.5px;width:60px;text-align:center;color:#3c4045">10</span>
<svg class="ab" style="left:256.5px;top:141px" width="40" height="44" viewBox="0 0 40 44"><path d="M32.2,13.4L33.2,13.5M31.5,15.8L33.4,16.6M30.2,17.9L32.4,19.9M28.2,19.5L29.0,20.8M25.9,20.4L26.4,22.9M23.4,20.6L23.3,21.6M21.0,19.9L20.2,21.8M18.9,18.6L16.9,20.8M17.3,16.6L16.0,17.4M16.4,14.3L13.9,14.8M16.2,11.8L15.2,11.7M16.9,9.4L15.0,8.6M18.2,7.3L16.0,5.3M20.2,5.7L19.4,4.4M22.5,4.8L22.0,2.3M25.0,4.6L25.1,3.6M27.4,5.3L28.2,3.4M29.5,6.6L31.5,4.4M31.1,8.6L32.4,7.8M32.0,10.9L34.5,10.4" stroke="#f6b830" stroke-opacity="0.6" stroke-width="0.5" fill="none"/><circle cx="24.2" cy="12.6" r="8" fill="url(#sun)" stroke="#e39300" stroke-width=".8"/><g><ellipse cx="19.5" cy="26.5" rx="16.5" ry="2" fill="#9a9aa0" opacity=".7"/><circle cx="9.5" cy="20.8" r="6.2" fill="url(#cl)"/><circle cx="15.5" cy="17.1" r="5.6" fill="url(#cl)"/><circle cx="22" cy="18.8" r="6" fill="url(#cl)"/><circle cx="28" cy="21.3" r="5.6" fill="url(#cl)"/><circle cx="32" cy="22.8" r="4.6" fill="url(#cl)"/><circle cx="6" cy="17.8" r="3.8" fill="url(#cl)"/><circle cx="5.5" cy="21.8" r="4" fill="url(#cl)"/><ellipse cx="19" cy="23.8" rx="16.3" ry="3.6" fill="#d9d9dd"/><ellipse cx="16" cy="19.3" rx="9" ry="4" fill="#efeff1" opacity=".8"/></g></svg>
<span class="ab t" style="left:246.5px;top:189.5px;width:60px;text-align:center;color:#3a3a3a;letter-spacing:-0.2px">56°F</span>
<span class="ab t" style="left:246.5px;top:227.5px;width:60px;text-align:center;color:#3a3a3a;letter-spacing:-0.2px">38°F</span>
<span class="ab t b" style="left:307.5px;top:113.5px;width:60px;text-align:center;color:#3c4045">11</span>
<svg class="ab" style="left:317.5px;top:141px" width="40" height="44" viewBox="0 0 40 44"><path d="M32.8,14.0L33.8,14.1M32.1,16.4L34.0,17.2M30.8,18.5L33.0,20.5M28.8,20.1L29.6,21.4M26.5,21.0L27.0,23.5M24.0,21.2L23.9,22.2M21.6,20.5L20.8,22.4M19.5,19.2L17.5,21.4M17.9,17.2L16.6,18.0M17.0,14.9L14.5,15.4M16.8,12.4L15.8,12.3M17.5,10.0L15.6,9.2M18.8,7.9L16.6,5.9M20.8,6.3L20.0,5.0M23.1,5.4L22.6,2.9M25.6,5.2L25.7,4.2M28.0,5.9L28.8,4.0M30.1,7.2L32.1,5.0M31.7,9.2L33.0,8.4M32.6,11.5L35.1,11.0" stroke="#f6b830" stroke-opacity="0.6" stroke-width="0.5" fill="none"/><circle cx="24.8" cy="13.2" r="8" fill="url(#sun)" stroke="#e39300" stroke-width=".8"/><g><ellipse cx="19.5" cy="24.2" rx="16.5" ry="2" fill="#9a9aa0" opacity=".7"/><circle cx="9.5" cy="18.5" r="6.2" fill="url(#cl)"/><circle cx="15.5" cy="14.8" r="5.6" fill="url(#cl)"/><circle cx="22" cy="16.5" r="6" fill="url(#cl)"/><circle cx="28" cy="19" r="5.6" fill="url(#cl)"/><circle cx="32" cy="20.5" r="4.6" fill="url(#cl)"/><circle cx="6" cy="15.5" r="3.8" fill="url(#cl)"/><circle cx="5.5" cy="19.5" r="4" fill="url(#cl)"/><ellipse cx="19" cy="21.5" rx="16.3" ry="3.6" fill="#d9d9dd"/><ellipse cx="16" cy="17" rx="9" ry="4" fill="#efeff1" opacity=".8"/></g><path d="M15.5,24.8 q1.5,2.2 0,3.2 q-1.5,-1.1 0,-3.2z" fill="#4f86c6"/><path d="M21.5,24.8 q1.5,2.2 0,3.2 q-1.5,-1.1 0,-3.2z" fill="#4f86c6"/><path d="M26.8,25.4 q1.5,2.2 0,3.2 q-1.5,-1.1 0,-3.2z" fill="#4f86c6"/><path d="M30.0,24.1 q1.5,2.2 0,3.2 q-1.5,-1.1 0,-3.2z" fill="#4f86c6"/><path d="M32.7,25.4 q1.5,2.2 0,3.2 q-1.5,-1.1 0,-3.2z" fill="#4f86c6"/><path d="M12.9,28.1 q1.5,2.2 0,3.2 q-1.5,-1.1 0,-3.2z" fill="#4f86c6"/><path d="M17.5,28.1 q1.5,2.2 0,3.2 q-1.5,-1.1 0,-3.2z" fill="#4f86c6"/><path d="M23.5,31.4 q1.5,2.2 0,3.2 q-1.5,-1.1 0,-3.2z" fill="#4f86c6"/><path d="M29.4,30.4 q1.5,2.2 0,3.2 q-1.5,-1.1 0,-3.2z" fill="#4f86c6"/><path d="M11.6,32.4 q1.5,2.2 0,3.2 q-1.5,-1.1 0,-3.2z" fill="#4f86c6"/><path d="M17.5,34.7 q1.5,2.2 0,3.2 q-1.5,-1.1 0,-3.2z" fill="#4f86c6"/><path d="M4.6,33.1 q1.5,2.2 0,3.2 q-1.5,-1.1 0,-3.2z" fill="#4f86c6"/></svg>
<span class="ab t" style="left:307.5px;top:189.5px;width:60px;text-align:center;color:#3a3a3a;letter-spacing:-0.2px">58°F</span>
<span class="ab t" style="left:307.5px;top:227.5px;width:60px;text-align:center;color:#3a3a3a;letter-spacing:-0.2px">41°F</span>
<span class="ab s" style="left:103px;top:259px;color:#2a2a2a;letter-spacing:0.036px;">Data provided by NOAA National Weather Service</span>
</div>
<div class="ab" id="panel" style="left:0;top:865px;width:1440px;height:35px;background:#c9c9c9;border-top:1px solid #6f7c80">
<svg class="ab" style="left:0;top:0px" width="33" height="34" viewBox="0 0 33 34"><circle cx="16.25" cy="18" r="15.2" fill="url(#suse)" stroke="#4a9416" stroke-width=".9"/><path d="M3.2 13 A14 14 0 0 1 29.6 13.5" fill="none" stroke="#fff" stroke-opacity=".8" stroke-width="1.7" stroke-linecap="round"/><path d="M4.5 11.5 Q16 4.5 28 11 Q17 7.5 4.5 11.5Z" fill="#fff" opacity=".35"/><circle cx="19.7" cy="14.8" r="3.2" fill="#8fd050" stroke="#d6f0b8" stroke-width="1.4"/><circle cx="20.2" cy="14.6" r="1" fill="#5fa826"/><path d="M10.5 18.2 Q13 21 18.5 22.3 Q24 23.3 27.2 21.6" fill="none" stroke="#c9eaa6" stroke-width="1.5" stroke-linecap="round"/><path d="M6.5 27.5 Q16 26.8 25 25.5 Q22 31.5 14.5 31 Q9 30.5 6.5 27.5Z" fill="#fff" opacity=".88"/></svg>
<div class="ab " style="left:36.9px;top:13.999999999999977px;width:7.8px;height:6.8px;background:#1c2224;border-radius:2.4px"></div>
<div class="ab " style="left:48.2px;top:13.999999999999977px;width:7.8px;height:6.8px;background:#1c2224;border-radius:2.4px"></div>
<div class="ab " style="left:59.5px;top:13.999999999999977px;width:7.8px;height:6.8px;background:#1c2224;border-radius:2.4px"></div>
<svg class="ab" style="left:73px;top:2px" width="77" height="33" viewBox="0 0 77 33"><rect x="0.8300000000000001" y="0.94" width="22.6" height="13.6" rx="3.5" fill="#c3c3c3" stroke="#4b5c64" stroke-width="1.15"/><rect x="26.83" y="0.94" width="22.6" height="13.6" rx="3.5" fill="#c3c3c3" stroke="#4b5c64" stroke-width="1.15"/><rect x="53.06" y="0.94" width="22.6" height="13.6" rx="3.5" fill="#c3c3c3" stroke="#4b5c64" stroke-width="1.15"/><rect x="0.8300000000000001" y="17.61" width="22.6" height="13.6" rx="3.5" fill="#b8b8b8" stroke="#e2e2e2" stroke-width="1"/><rect x="26.83" y="17.61" width="22.6" height="13.6" rx="3.5" fill="#c3c3c3" stroke="#4b5c64" stroke-width="1.15"/><rect x="53.06" y="17.61" width="22.6" height="13.6" rx="3.5" fill="#c3c3c3" stroke="#4b5c64" stroke-width="1.15"/><path d="M1.0,9.56 L13.22,9.56 L13.22,14.22" fill="none" stroke="#4b5c64" stroke-width="0.9"/><path d="M14.78,14.22 L14.78,9.56 L22.78,9.56" fill="none" stroke="#4b5c64" stroke-width="0.9"/><path d="M33.44,0.89 L33.44,14.22" fill="none" stroke="#4b5c64" stroke-width="0.9"/><path d="M40.56,14.22 L40.56,10.0 L48.78,10.0" fill="none" stroke="#4b5c64" stroke-width="0.9"/><path d="M66.78,14.22 L66.78,10.0 L75.0,10.0" fill="none" stroke="#4b5c64" stroke-width="0.9"/><path d="M1.44,27.11 L22.78,27.11" fill="none" stroke="#5d6c73" stroke-width="0.9"/><path d="M17.67,17.78 L17.67,30.22" fill="none" stroke="#5d6c73" stroke-width="0.9"/><path d="M14.78,30.22 L14.78,27.11" fill="none" stroke="#5d6c73" stroke-width="0.9"/><path d="M33.89,20.0 L41.22,20.0 L41.22,29.78 L33.89,29.78 L33.89,20.0" fill="none" stroke="#4b5c64" stroke-width="0.9"/><path d="M41.22,25.33 L48.78,25.33" fill="none" stroke="#4b5c64" stroke-width="0.9"/><path d="M41.22,27.56 L48.78,27.56" fill="none" stroke="#6a7a80" stroke-width="0.9"/><path d="M66.78,30.89 L66.78,26.67 L75.0,26.67" fill="none" stroke="#4b5c64" stroke-width="0.9"/></svg>
<svg class="ab" style="left:161.5px;top:10.5px" width="15" height="15" viewBox="0 0 15 15"><defs><radialGradient id="ffb" cx=".6" cy=".3" r=".7"><stop offset="0" stop-color="#5ec4ee"/><stop offset=".6" stop-color="#2a72c0"/><stop offset="1" stop-color="#173a80"/></radialGradient><linearGradient id="ffo" x1="0" y1="0" x2="1" y2="1"><stop offset="0" stop-color="#f58a1c"/><stop offset=".6" stop-color="#e8501a"/><stop offset="1" stop-color="#d83a18"/></linearGradient></defs><circle cx="7.8" cy="7.2" r="6.3" fill="url(#ffb)"/><path d="M13.4 4.2 Q14.8 7.5 13.3 10.6 Q11.4 14.2 7.4 14.3 Q3.4 14.2 1.4 10.8 Q-0.2 7.6 1.2 4.2 Q1.6 2.8 2.6 1.8 Q2.6 3 3.2 3.4 Q4.2 2.6 5.4 3 Q4.4 3.8 4.6 4.8 L6.6 5.6 Q5.8 6.8 4.8 7 Q4.6 8.6 6 9.6 Q7.6 10.6 9.6 9.8 Q11 9.4 10.4 8.6 Q12 9 12.6 7.6 Q13.2 6 13.4 4.2Z" fill="url(#ffo)"/><path d="M13.2 4.4 Q14.4 7.4 13.1 10.2 Q12.2 12 10.6 13 Q12.6 10.4 12.6 7.6 Q13.1 6 13.2 4.4Z" fill="#fbd52a"/></svg>
<svg class="ab" style="left:191px;top:9.5px" width="15" height="17" viewBox="0 0 15 17"><defs><linearGradient id="drw" x1="0" y1="0" x2="0" y2="1"><stop offset="0" stop-color="#2f7fe0"/><stop offset="1" stop-color="#8fd0ff"/></linearGradient></defs><path d="M2.6 0.6 H12.4 L14.4 2.6 V14.4 Q14.4 15.8 13 15.8 H2 Q0.6 15.8 0.6 14.4 V2.6 Z" fill="#f2f2f2" stroke="#8a8a8a" stroke-width="1"/><rect x="2.4" y="4.3" width="10.2" height="3.9" fill="url(#drw)" stroke="#2a6ccc" stroke-width=".5"/><rect x="2.4" y="9.9" width="10.2" height="3.9" fill="url(#drw)" stroke="#2a6ccc" stroke-width=".5"/><rect x="5.4" y="3.6" width="4.2" height="1.7" fill="#fff" stroke="#cfd8e6" stroke-width=".4"/><rect x="5.4" y="9.2" width="4.2" height="1.7" fill="#fff" stroke="#cfd8e6" stroke-width=".4"/></svg>
<svg class="ab" style="left:221px;top:11px" width="18.5" height="15.5" viewBox="0 0 19 16"><rect x="2.5" y="0.5" width="12" height="11.5" rx="1.5" fill="url(#org)" stroke="#e07000" stroke-width=".6"/><path d="M5 10 a1 1 0 1 1 .01 0 M4.5 6.8 a3 3 0 0 1 3 3 M4.5 4.6 a5.2 5.2 0 0 1 5.2 5.2" fill="none" stroke="#fff" stroke-width="1.1"/><rect x="3" y="11.3" width="5.5" height="3.2" rx="1.4" fill="#fff" stroke="#333" stroke-width="1"/><rect x="10.5" y="11.3" width="5.5" height="3.2" rx="1.4" fill="#fff" stroke="#333" stroke-width="1"/><path d="M1 10.5 L3 12 M8.5 12.5 L10.5 12.5" stroke="#333" stroke-width="1" fill="none"/></svg>
<span class="ab t" style="left:241.3px;top:8.5px;color:#3a3a3a;letter-spacing:0.195px;">Akregator</span>
<svg class="ab" style="left:454px;top:10px" width="16" height="16" viewBox="0 0 16 16"><rect x=".5" y="1" width="15" height="14" rx="1.5" fill="#d8d8d8" stroke="#555"/><rect x="2" y="2.5" width="12" height="10.5" fill="#1c1c1c"/><path d="M3 4.5 L5 5.5 L3 6.5 M6 6.5 H8.5" stroke="#eee" stroke-width=".8" fill="none"/></svg>
<span class="ab t" style="left:473px;top:8.5px;color:#3a3a3a;letter-spacing:0.062px;">foo : csh – Konsole</span>
<svg class="ab" opacity=".85" style="left:1126.5px;top:6.5px" width="27" height="18" viewBox="0 0 60 40"><defs><filter id="hz1126" x="-20%" y="-50%" width="140%" height="200%"><feGaussianBlur stdDeviation="0.9"/></filter><filter id="hy1126" x="-30%" y="-30%" width="160%" height="160%"><feGaussianBlur stdDeviation="2"/></filter></defs><circle cx="32" cy="19.5" r="14.5" fill="#ffd24a" opacity=".35" filter="url(#hy1126)"/><path d="M43.9,20.7L47.1,21.0M43.4,23.3L48.0,24.9M42.2,25.8L47.8,29.2M40.6,27.9L43.5,30.7M38.5,29.6L41.6,34.3M36.1,30.8L37.2,33.8M33.5,31.4L34.1,36.2M30.8,31.4L30.2,37.9M28.2,30.9L26.9,34.7M25.7,29.7L22.8,34.6M23.6,28.1L21.4,30.4M21.9,26.0L17.9,28.6M20.7,23.6L14.6,25.8M20.1,21.0L16.1,21.5M20.1,18.3L14.4,17.7M20.6,15.7L17.6,14.7M21.8,13.2L17.6,10.7M23.4,11.1L18.8,6.6M25.5,9.4L23.3,6.1M27.9,8.2L26.0,2.9M30.5,7.6L30.1,4.4M33.2,7.6L33.7,2.7M35.8,8.1L37.9,2.0M38.3,9.3L40.3,5.8M40.4,10.9L44.3,6.9M42.1,13.0L44.7,11.3M43.3,15.4L47.8,13.7M43.9,18.0L50.4,17.2" stroke="#f6b830" stroke-opacity="0.55" stroke-width="0.5" fill="none"/><circle cx="32" cy="19.5" r="12.3" fill="url(#sun)" stroke="#e39300" stroke-width=".9"/><g filter="url(#hz1126)" fill="#fff"><ellipse cx="30" cy="24.5" rx="13" ry="3" opacity=".65"/><ellipse cx="32" cy="29" rx="12" ry="4" opacity=".6"/><ellipse cx="16" cy="27" rx="14" ry="1.6" opacity=".8"/><ellipse cx="22" cy="31.5" rx="15" ry="1.7" opacity=".75"/><ellipse cx="44" cy="25" rx="13" ry="1.5" opacity=".8"/><ellipse cx="46" cy="30" rx="11" ry="1.3" opacity=".6"/><ellipse cx="20" cy="34.5" rx="10" ry="1.3" opacity=".7"/><ellipse cx="34" cy="33" rx="9" ry="1.6" opacity=".6"/></g></svg>
<svg class="ab" style="left:1157px;top:6px" width="22" height="24" viewBox="0 0 22 24"><rect x="3" y="1" width="15" height="16" rx="1.5" fill="url(#org)" stroke="#e07000" stroke-width=".6" transform="skewX(-4) translate(1.5,0)"/><rect x="7" y="4" width="9" height="10" fill="#fff" opacity=".85"/><text x="11.5" y="13" font-family="DejaVu Sans" font-weight="bold" font-size="11" text-anchor="middle" fill="#1a9a6a">4</text><path d="M2 15 Q6 20 12 19.5 Q18 19 21 15" fill="none" stroke="#333" stroke-width="1"/><ellipse cx="7.5" cy="18" rx="3" ry="1.6" fill="#eee" stroke="#333" stroke-width=".7"/><ellipse cx="15" cy="18" rx="3" ry="1.6" fill="#eee" stroke="#333" stroke-width=".7"/></svg>
<svg class="ab" style="left:1184px;top:7px" width="24" height="22" viewBox="0 0 24 22"><g fill="none" stroke="#111" stroke-width="2.1"><path d="M8.8 15.5 V2.2 H21.8 V15.5"/><ellipse cx="5.6" cy="16.3" rx="3.3" ry="3.1"/><ellipse cx="18.6" cy="16.3" rx="3.3" ry="3.1"/></g></svg>
<div class="ab " style="left:1212px;top:6px;width:24px;height:24px;background:#ededed"></div>
<svg class="ab" style="left:1212px;top:6px" width="24" height="24" viewBox="0 0 24 24"><rect x="5.5" y="1.5" width="3.2" height="7" rx="1.4" fill="#f0e020" stroke="#333" stroke-width=".8"/><rect x="13" y="1.5" width="3.2" height="7" rx="1.4" fill="#f0e020" stroke="#333" stroke-width=".8"/><path d="M2.5 7 H19.5 L18 13 Q16 15.5 11 15.5 Q6 15.5 4 13 Z" fill="#3a3a3a"/><path d="M11 15 Q11 19 15 19.5 Q19 20 21 22.5" fill="none" stroke="#3a3a3a" stroke-width="2.6"/></svg>
<div class="ab " style="left:1240px;top:6px;width:24px;height:24px;background:#ededed"></div>
<svg class="ab" style="left:1240px;top:6px" width="24" height="24" viewBox="0 0 24 24"><path d="M2 8 L4 6 H20 L22 8 V20 H2 Z" fill="#9a9a9a" stroke="#444" stroke-width=".8"/><rect x="2" y="8" width="18" height="12" fill="#b4b4b4" stroke="#444" stroke-width=".6"/><path d="M6 3 V6 M4.5 4.5 H7.5 M15.5 4.5 H18.5 M6 6 V7 M17 6 V7" stroke="#222" stroke-width="1"/><text x="11" y="18" font-family="DejaVu Sans" font-weight="bold" font-size="8.5" text-anchor="middle" fill="#e01818">UPS</text></svg>
<span class="ab b" style="left:1271.3px;top:8.600000000000023px;font-family:'DejaVu Sans Condensed','Liberation Sans',sans-serif;font-size:12.6px;line-height:15px;color:#3c46a8;letter-spacing:0.062px;">US</span>
<svg class="ab" style="left:1296px;top:6px" width="24" height="24" viewBox="0 0 24 24"><g fill="none" stroke-linecap="round"><path d="M5.6 3 Q7.5 9.5 15.2 16.2" stroke="#111" stroke-width="4.6"/><path d="M5.6 3 Q7.5 9.5 15.2 16.2" stroke="#c9c9c9" stroke-width="1.7"/><path d="M18.2 3 Q16.3 9.5 8.6 16.2" stroke="#111" stroke-width="4.6"/><path d="M18.2 3 Q16.3 9.5 8.6 16.2" stroke="#c9c9c9" stroke-width="1.7"/><ellipse cx="5.7" cy="18.6" rx="3.7" ry="3.1" stroke="#111" stroke-width="1.9" fill="#c9c9c9"/><ellipse cx="18.1" cy="18.6" rx="3.7" ry="3.1" stroke="#111" stroke-width="1.9" fill="#c9c9c9"/></g><circle cx="5.7" cy="18" r=".6" fill="#555"/><circle cx="18.1" cy="18" r=".6" fill="#555"/></svg>
<svg class="ab" style="left:1326px;top:8px" width="24" height="22" viewBox="0 0 24 22"><g fill="none" stroke="#111" stroke-width="1.9" stroke-linejoin="round"><path d="M2 6.5 H5.5 L10 2.5 V17.5 L5.5 13.5 H2 Z"/><path d="M14 5.5 V14.5 M18.3 2.5 V17.5"/></g></svg>
<svg class="ab" style="left:1357px;top:14px" width="9" height="6" viewBox="0 0 9 6"><path d="M0.5 5 L4.5 1 L8.5 5 Z" fill="#27b08f"/></svg>
<span class="ab t" style="left:1377.5px;top:8.5px;color:#3a3a3a;letter-spacing:0.107px;">10:30 AM</span>
</div>
</div></body></html>
